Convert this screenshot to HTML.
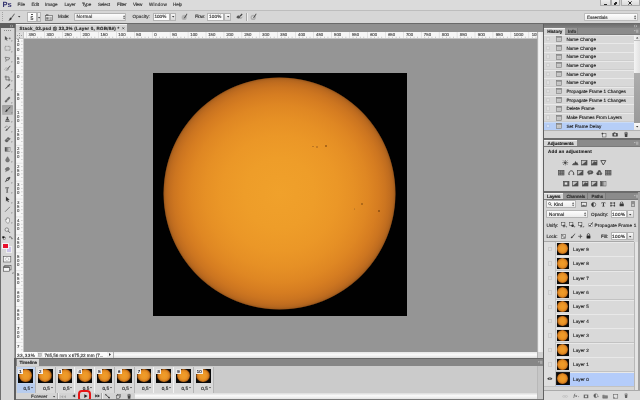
<!DOCTYPE html>
<html>
<head>
<meta charset="utf-8">
<title>Photoshop</title>
<style>
html,body{margin:0;padding:0;}
body{width:640px;height:400px;overflow:hidden;background:#d6d6d6;position:relative;font-family:"Liberation Sans",sans-serif;font-size:3.9px;color:#222;line-height:1.15;text-rendering:geometricPrecision;}
.a{position:absolute;}
.t{position:absolute;white-space:nowrap;-webkit-text-stroke:0.14px currentColor;}
svg{overflow:visible;}
</style>
</head>
<body>
<div id="root" style="position:absolute;left:0;top:0;width:640px;height:400px;overflow:hidden;will-change:transform;opacity:0.999;">
<div class="a" style="left:0.00px;top:0.00px;width:640.00px;height:10.00px;background:#dbdbdb;"></div>
<div class="a" style="left:0.00px;top:10.00px;width:640.00px;height:13.00px;background:#d6d6d6;"></div>
<div class="a" style="left:0.00px;top:9.80px;width:640.00px;height:0.60px;background:#f2f2f2;"></div>
<div class="a" style="left:0.00px;top:10.40px;width:640.00px;height:0.50px;background:#bdbdbd;"></div>
<div class="a" style="left:0.00px;top:22.80px;width:640.00px;height:1.00px;background:#6a6a6a;"></div>
<div class="a" style="left:0.00px;top:23.80px;width:640.00px;height:1.50px;background:#8f8f8f;"></div>
<div class="a" style="left:0.00px;top:23.50px;width:16.00px;height:376.50px;background:#d6d6d6;"></div>
<div class="a" style="left:0.00px;top:23.50px;width:1.40px;height:376.50px;background:#6e6e6e;"></div>
<div class="a" style="left:13.90px;top:23.50px;width:2.10px;height:376.50px;background:linear-gradient(90deg,#b8b8b8 0%,#8a8a8a 45%,#6e6e6e 100%);"></div>
<div class="a" style="left:0.00px;top:23.30px;width:15.00px;height:4.40px;background:#5f5f5f;"></div>
<div class="a" style="left:14.40px;top:358.00px;width:1.60px;height:42.00px;background:#5f5f5f;"></div>
<div class="a" style="left:16.00px;top:25.00px;width:527.00px;height:7.00px;background:#909090;"></div>
<div class="a" style="left:16.00px;top:24.30px;width:111.00px;height:7.70px;background:#d4d4d4;"></div>
<div class="a" style="left:16.00px;top:24.30px;width:111.00px;height:0.60px;background:#f0f0f0;"></div>
<div class="a" style="left:23.00px;top:38.20px;width:514.50px;height:313.80px;background:#959595;"></div>
<div class="a" style="left:16.00px;top:32.00px;width:521.50px;height:6.30px;background:#f6f6f6;"></div>
<div class="a" style="left:16.00px;top:32.00px;width:7.00px;height:320.00px;background:#f6f6f6;"></div>
<div class="a" style="left:537.30px;top:32.00px;width:5.70px;height:326.00px;background:linear-gradient(90deg,#dcdcdc,#f4f4f4 40%,#e4e4e4);"></div>
<div class="a" style="left:16.00px;top:352.00px;width:521.30px;height:5.80px;background:linear-gradient(180deg,#e6e6e6,#fafafa 45%,#dedede);"></div>
<div class="a" style="left:537.30px;top:352.00px;width:5.70px;height:5.80px;background:#d0d0d0;"></div>
<div class="a" style="left:153.00px;top:73.40px;width:253.70px;height:242.80px;background:#000;"></div>
<div class="a" style="left:163.0px;top:76.9px;width:233.2px;height:233.2px;border-radius:50%;background:radial-gradient(circle closest-side at 50% 50%, #f0a12b 0%, #ee9d29 30%, #eb9727 50%, #e69025 64%, #df8723 76%, #d67d21 85%, #cc7520 91%, #c16d1f 95%, #b4661e 97.6%, #a05a1c 99%, rgba(120,66,20,0.55) 99.7%, rgba(0,0,0,0) 100%);"></div>
<div class="a" style="left:312.20px;top:145.70px;width:1.60px;height:1.60px;border-radius:50%;background:#b97320;"></div>
<div class="a" style="left:316.20px;top:146.20px;width:1.60px;height:1.60px;border-radius:50%;background:#bd7622;"></div>
<div class="a" style="left:324.50px;top:145.30px;width:2.00px;height:2.00px;border-radius:50%;background:#9a5a14;"></div>
<div class="a" style="left:360.80px;top:202.60px;width:2.00px;height:2.00px;border-radius:50%;background:#a05f16;"></div>
<div class="a" style="left:353.90px;top:208.30px;width:1.40px;height:1.40px;border-radius:50%;background:#c27a24;"></div>
<div class="a" style="left:378.00px;top:210.30px;width:2.00px;height:2.00px;border-radius:50%;background:#8a4c10;"></div>
<div class="a" style="left:16.00px;top:357.80px;width:527.00px;height:1.40px;background:#676767;"></div>
<div class="a" style="left:16.00px;top:359.20px;width:527.00px;height:6.80px;background:#868686;"></div>
<div class="a" style="left:17.30px;top:359.40px;width:21.30px;height:6.60px;background:#d4d4d4;"></div>
<div class="a" style="left:16.00px;top:366.00px;width:527.00px;height:34.00px;background:#cbcbcb;"></div>
<div class="a" style="left:543.00px;top:23.80px;width:97.00px;height:376.20px;background:#d6d6d6;"></div>
<div class="a" style="left:543.00px;top:23.80px;width:1.20px;height:376.20px;background:#606060;"></div>
<div class="t" style="left:2.40px;top:1px;font-size:7.6px;color:#33326f;letter-spacing:-0.048px;font-weight:bold;-webkit-text-stroke:0px currentColor;">Ps</div>
<div class="t" style="left:17.60px;top:2px;font-size:4.6px;color:#333;">File</div>
<div class="t" style="left:31.40px;top:2px;font-size:4.6px;color:#333;letter-spacing:-0.082px;">Edit</div>
<div class="t" style="left:45.00px;top:2px;font-size:4.6px;color:#333;letter-spacing:-0.037px;">Image</div>
<div class="t" style="left:64.40px;top:2px;font-size:4.6px;color:#333;letter-spacing:-0.101px;">Layer</div>
<div class="t" style="left:82.00px;top:2px;font-size:4.6px;color:#333;letter-spacing:-0.243px;">Type</div>
<div class="t" style="left:98.00px;top:2px;font-size:4.6px;color:#333;letter-spacing:-0.131px;">Select</div>
<div class="t" style="left:117.00px;top:2px;font-size:4.6px;color:#333;letter-spacing:-0.137px;">Filter</div>
<div class="t" style="left:133.00px;top:2px;font-size:4.6px;color:#333;letter-spacing:-0.222px;">View</div>
<div class="t" style="left:149.00px;top:2px;font-size:4.6px;color:#333;letter-spacing:0.273px;">Window</div>
<div class="t" style="left:173.00px;top:2px;font-size:4.6px;color:#333;letter-spacing:-0.115px;">Help</div>
<div class="a" style="left:600.00px;top:0.00px;width:40.00px;height:6.40px;background:#d2d2d2;border-radius:0 0 1px 1px;"></div>
<div class="a" style="left:600.20px;top:0.00px;width:10.40px;height:6.40px;background:linear-gradient(180deg,#ececec,#dadada);border:0.4px solid #ababab;border-top:none;box-sizing:border-box;border-radius:0 0 1px 1px;"></div>
<div class="a" style="left:611.20px;top:0.00px;width:9.20px;height:6.40px;background:linear-gradient(180deg,#ececec,#dadada);border:0.4px solid #ababab;border-top:none;box-sizing:border-box;border-radius:0 0 1px 1px;"></div>
<div class="a" style="left:621.20px;top:0.00px;width:18.60px;height:6.40px;background:linear-gradient(180deg,#ececec,#dadada);border:0.4px solid #ababab;border-top:none;box-sizing:border-box;border-radius:0 0 1px 1px;"></div>
<div class="a" style="left:603.60px;top:3.60px;width:3.20px;height:1.00px;background:#2a2a2a;"></div>
<div class="a" style="left:614.60px;top:1.80px;width:2.60px;height:2.20px;background:transparent;border:0.7px solid #2a2a2a;box-sizing:border-box;"></div>
<div class="a" style="left:613.80px;top:2.80px;width:2.60px;height:2.20px;background:#e6e6e6;border:0.7px solid #2a2a2a;box-sizing:border-box;"></div>
<svg class="a" style="left:628.20px;top:1.40px" width="4" height="4" viewBox="0 0 4 4"><path d="M0.4 0.4L3.6 3.6M3.6 0.4L0.4 3.6" stroke="#222" stroke-width="1.0" fill="none"/></svg>
<div class="a" style="left:2.30px;top:12.40px;width:0.60px;height:0.90px;background:#a2a2a2;"></div>
<div class="a" style="left:2.30px;top:14.30px;width:0.60px;height:0.90px;background:#a2a2a2;"></div>
<div class="a" style="left:2.30px;top:16.20px;width:0.60px;height:0.90px;background:#a2a2a2;"></div>
<div class="a" style="left:2.30px;top:18.10px;width:0.60px;height:0.90px;background:#a2a2a2;"></div>
<div class="a" style="left:2.30px;top:20.00px;width:0.60px;height:0.90px;background:#a2a2a2;"></div>
<svg class="a" style="left:7.50px;top:12.60px" width="7" height="8" viewBox="0 0 7 8"><path d="M6.3 0.5L3.2 4.4L3.9 5.0L6.8 1.0Z" fill="#555"/><path d="M3.0 4.6C2.0 4.6 1.6 5.4 1.5 6.2C1.3 6.8 0.7 7.2 0.3 7.3C1.6 7.8 3.4 7.3 3.8 5.3Z" fill="#333"/></svg>
<svg class="a" style="left:18.20px;top:16.20px" width="2.4" height="1.6" viewBox="0 0 2.4 1.6"><path d="M0 0H2.4L1.2 1.5Z" fill="#333"/></svg>
<div class="a" style="left:27.00px;top:12.00px;width:10.00px;height:10.30px;background:linear-gradient(180deg,#ffffff,#f2f2f2);border:0.4px solid #b4b4b4;box-sizing:border-box;"></div>
<div class="a" style="left:31.30px;top:13.60px;width:1.30px;height:1.30px;background:#333;border-radius:50%;"></div>
<div class="t" style="left:30.40px;top:17px;font-size:5.2px;color:#1a1a1a;letter-spacing:0.008px;">5</div>
<div class="a" style="left:37.20px;top:12.00px;width:3.80px;height:10.30px;background:linear-gradient(180deg,#f4f4f4,#d6d6d6);border:0.4px solid #b4b4b4;box-sizing:border-box;"></div>
<svg class="a" style="left:38.00px;top:16.60px" width="2.2" height="1.5" viewBox="0 0 2.2 1.5"><path d="M0 0H2.2L1.1 1.4Z" fill="#333"/></svg>
<svg class="a" style="left:44.60px;top:13.80px" width="8" height="7" viewBox="0 0 8 7"><rect x="0.3" y="1.6" width="7.2" height="5" fill="#e9e9e9" stroke="#555" stroke-width="0.6"/><rect x="1.0" y="0.3" width="2.4" height="1.6" fill="#666"/><path d="M1.2 3.2H3.6V5.6H1.2Z" fill="#777"/><path d="M4.4 3.4H6.8M4.4 4.6H6.8M4.4 5.6H6.8" stroke="#666" stroke-width="0.5"/></svg>
<div class="t" style="left:58.00px;top:14px;font-size:4.6px;color:#333;letter-spacing:-0.357px;">Mode:</div>
<div class="a" style="left:73.60px;top:12.80px;width:52.60px;height:7.80px;background:linear-gradient(180deg,#fdfdfd,#e9e9e9);border:0.4px solid #b4b4b4;box-sizing:border-box;border-radius:0.8px;"></div>
<div class="t" style="left:76.40px;top:14px;font-size:4.6px;color:#333;letter-spacing:0.196px;">Normal</div>
<svg class="a" style="left:122.60px;top:14.60px" width="2.2" height="4.4" viewBox="0 0 2.2 4.4"><path d="M0 1.7L1.1 0.2L2.2 1.7ZM0 2.7L1.1 4.2L2.2 2.7Z" fill="#444"/></svg>
<div class="t" style="left:132.50px;top:14px;font-size:4.6px;color:#333;letter-spacing:0.078px;">Opacity:</div>
<div class="a" style="left:152.60px;top:12.80px;width:17.00px;height:7.80px;background:#fbfbfb;border:0.4px solid #b4b4b4;box-sizing:border-box;"></div>
<div class="t" style="left:154.60px;top:14px;font-size:4.6px;color:#333;letter-spacing:-0.041px;">100%</div>
<div class="a" style="left:170.00px;top:12.80px;width:6.20px;height:7.80px;background:linear-gradient(180deg,#f6f6f6,#d8d8d8);border:0.4px solid #b4b4b4;box-sizing:border-box;"></div>
<svg class="a" style="left:171.90px;top:16.20px" width="2.4" height="1.6" viewBox="0 0 2.4 1.6"><path d="M0 0H2.4L1.2 1.5Z" fill="#333"/></svg>
<svg class="a" style="left:181.00px;top:13.20px" width="7" height="7.4" viewBox="0 0 7 7.4"><circle cx="3.2" cy="4.4" r="2.6" fill="#b5b5b5"/><path d="M5.8 0.6L3.4 4.2L2.6 5.8L4.2 4.8L6.4 1.0Z" fill="#444"/></svg>
<div class="t" style="left:195.00px;top:14px;font-size:4.6px;color:#333;letter-spacing:-0.298px;">Flow:</div>
<div class="a" style="left:206.80px;top:12.80px;width:17.00px;height:7.80px;background:#fbfbfb;border:0.4px solid #b4b4b4;box-sizing:border-box;"></div>
<div class="t" style="left:209.00px;top:14px;font-size:4.6px;color:#333;letter-spacing:0.159px;">100%</div>
<div class="a" style="left:224.40px;top:12.80px;width:7.00px;height:7.80px;background:linear-gradient(180deg,#f6f6f6,#d8d8d8);border:0.4px solid #b4b4b4;box-sizing:border-box;"></div>
<svg class="a" style="left:226.70px;top:16.20px" width="2.4" height="1.6" viewBox="0 0 2.4 1.6"><path d="M0 0H2.4L1.2 1.5Z" fill="#333"/></svg>
<svg class="a" style="left:235.60px;top:13.40px" width="7.4" height="7" viewBox="0 0 7.4 7"><path d="M0.4 4.6C1.0 2.6 2.6 2.2 3.6 3.0L4.4 4.2C3.8 5.6 2.0 6.2 0.4 4.6Z" fill="#555"/><path d="M3.6 2.8L5.8 0.6L6.6 1.4L4.6 3.8Z" fill="#444"/><path d="M4.0 5.2C5.0 5.6 5.8 4.8 6.6 3.8" stroke="#666" stroke-width="0.5" fill="none"/></svg>
<div class="a" style="left:246.00px;top:12.60px;width:0.50px;height:8.40px;background:#a8a8a8;"></div>
<div class="a" style="left:246.50px;top:12.60px;width:0.50px;height:8.40px;background:#ededed;"></div>
<svg class="a" style="left:250.00px;top:13.20px" width="7.4" height="7.4" viewBox="0 0 7.4 7.4"><circle cx="3.2" cy="4.4" r="2.6" fill="#b0b0b0"/><circle cx="3.2" cy="4.4" r="1.2" fill="#dcdcdc"/><path d="M6.0 0.6L3.6 4.0L2.8 5.6L4.4 4.6L6.6 1.0Z" fill="#444"/></svg>
<div class="a" style="left:583.60px;top:13.00px;width:54.20px;height:8.20px;background:linear-gradient(180deg,#fefefe,#ececec);border:0.4px solid #bdbdbd;box-sizing:border-box;border-radius:0.8px;"></div>
<div class="t" style="left:587.00px;top:15px;font-size:4.6px;color:#333;letter-spacing:-0.037px;">Essentials</div>
<svg class="a" style="left:633.60px;top:14.80px" width="2.2" height="4.6" viewBox="0 0 2.2 4.6"><path d="M0 1.8L1.1 0.2L2.2 1.8ZM0 2.8L1.1 4.4L2.2 2.8Z" fill="#444"/></svg>
<div class="t" style="left:19.40px;top:26px;font-size:4.5px;color:#2a2a2a;letter-spacing:0.250px;font-weight:bold;">Stack_03.psd @ 33,3% (Layer 0, RGB/8#) *</div>
<svg class="a" style="left:121.80px;top:26.80px" width="2.6" height="2.6" viewBox="0 0 2.6 2.6"><path d="M0.3 0.3L2.3 2.3M2.3 0.3L0.3 2.3" stroke="#333" stroke-width="0.6"/></svg>
<div class="a" style="left:4.20px;top:29.60px;width:1.00px;height:0.60px;background:#8a8a8a;"></div>
<div class="a" style="left:6.20px;top:29.60px;width:1.00px;height:0.60px;background:#8a8a8a;"></div>
<div class="a" style="left:8.20px;top:29.60px;width:1.00px;height:0.60px;background:#8a8a8a;"></div>
<div class="a" style="left:10.20px;top:29.60px;width:1.00px;height:0.60px;background:#8a8a8a;"></div>
<svg class="a" style="left:9.80px;top:24.60px" width="3.6" height="2.2" viewBox="0 0 3.6 2.2"><path d="M0 0L1.2 1.1L0 2.2M1.8 0L3.0 1.1L1.8 2.2" stroke="#cfcfcf" stroke-width="0.5" fill="none"/></svg>
<div class="t" style="left:28.51px;top:33px;font-size:4.3px;color:#484848;letter-spacing:0.008px;">350</div>
<div class="t" style="left:46.48px;top:33px;font-size:4.3px;color:#484848;letter-spacing:0.008px;">300</div>
<div class="t" style="left:64.45px;top:33px;font-size:4.3px;color:#484848;letter-spacing:0.008px;">250</div>
<div class="t" style="left:82.42px;top:33px;font-size:4.3px;color:#484848;letter-spacing:0.008px;">200</div>
<div class="t" style="left:100.39px;top:33px;font-size:4.3px;color:#484848;letter-spacing:0.008px;">150</div>
<div class="t" style="left:118.36px;top:33px;font-size:4.3px;color:#484848;letter-spacing:0.008px;">100</div>
<div class="t" style="left:136.33px;top:33px;font-size:4.3px;color:#484848;letter-spacing:-0.092px;">50</div>
<div class="t" style="left:154.30px;top:33px;font-size:4.3px;color:#484848;letter-spacing:-0.192px;">0</div>
<div class="t" style="left:172.27px;top:33px;font-size:4.3px;color:#484848;letter-spacing:-0.092px;">50</div>
<div class="t" style="left:190.24px;top:33px;font-size:4.3px;color:#484848;letter-spacing:0.008px;">100</div>
<div class="t" style="left:208.21px;top:33px;font-size:4.3px;color:#484848;letter-spacing:0.008px;">150</div>
<div class="t" style="left:226.18px;top:33px;font-size:4.3px;color:#484848;letter-spacing:0.008px;">200</div>
<div class="t" style="left:244.15px;top:33px;font-size:4.3px;color:#484848;letter-spacing:0.008px;">250</div>
<div class="t" style="left:262.12px;top:33px;font-size:4.3px;color:#484848;letter-spacing:0.008px;">300</div>
<div class="t" style="left:280.09px;top:33px;font-size:4.3px;color:#484848;letter-spacing:0.008px;">350</div>
<div class="t" style="left:298.06px;top:33px;font-size:4.3px;color:#484848;letter-spacing:0.008px;">400</div>
<div class="t" style="left:316.03px;top:33px;font-size:4.3px;color:#484848;letter-spacing:0.008px;">450</div>
<div class="t" style="left:334.00px;top:33px;font-size:4.3px;color:#484848;letter-spacing:0.008px;">500</div>
<div class="t" style="left:351.97px;top:33px;font-size:4.3px;color:#484848;letter-spacing:0.008px;">550</div>
<div class="t" style="left:369.94px;top:33px;font-size:4.3px;color:#484848;letter-spacing:0.008px;">600</div>
<div class="t" style="left:387.91px;top:33px;font-size:4.3px;color:#484848;letter-spacing:0.008px;">650</div>
<div class="t" style="left:405.88px;top:33px;font-size:4.3px;color:#484848;letter-spacing:0.008px;">700</div>
<div class="t" style="left:423.85px;top:33px;font-size:4.3px;color:#484848;letter-spacing:0.008px;">750</div>
<div class="t" style="left:441.82px;top:33px;font-size:4.3px;color:#484848;letter-spacing:0.008px;">800</div>
<div class="t" style="left:459.79px;top:33px;font-size:4.3px;color:#484848;letter-spacing:0.008px;">850</div>
<div class="t" style="left:477.76px;top:33px;font-size:4.3px;color:#484848;letter-spacing:0.008px;">900</div>
<div class="t" style="left:495.73px;top:33px;font-size:4.3px;color:#484848;letter-spacing:0.008px;">950</div>
<div class="t" style="left:513.70px;top:33px;font-size:4.3px;color:#484848;letter-spacing:0.008px;">1000</div>
<div class="t" style="left:531.67px;top:33px;font-size:4.3px;color:#484848;letter-spacing:0.008px;">1050</div>
<svg class="a" style="left:16.00px;top:32.00px" width="521" height="6.2" viewBox="0 0 521 6.2"><rect x="6.22" y="4.70" width="0.7" height="1.5" fill="#bdbdbd"/><rect x="9.91" y="0" width="0.5" height="6.2" fill="#cfcfcf"/><rect x="13.40" y="4.70" width="0.7" height="1.5" fill="#bdbdbd"/><rect x="17.00" y="4.70" width="0.7" height="1.5" fill="#bdbdbd"/><rect x="20.59" y="4.70" width="0.7" height="1.5" fill="#bdbdbd"/><rect x="24.19" y="4.70" width="0.7" height="1.5" fill="#bdbdbd"/><rect x="27.88" y="0" width="0.5" height="6.2" fill="#cfcfcf"/><rect x="31.37" y="4.70" width="0.7" height="1.5" fill="#bdbdbd"/><rect x="34.97" y="4.70" width="0.7" height="1.5" fill="#bdbdbd"/><rect x="38.56" y="4.70" width="0.7" height="1.5" fill="#bdbdbd"/><rect x="42.16" y="4.70" width="0.7" height="1.5" fill="#bdbdbd"/><rect x="45.85" y="0" width="0.5" height="6.2" fill="#cfcfcf"/><rect x="49.34" y="4.70" width="0.7" height="1.5" fill="#bdbdbd"/><rect x="52.94" y="4.70" width="0.7" height="1.5" fill="#bdbdbd"/><rect x="56.53" y="4.70" width="0.7" height="1.5" fill="#bdbdbd"/><rect x="60.13" y="4.70" width="0.7" height="1.5" fill="#bdbdbd"/><rect x="63.82" y="0" width="0.5" height="6.2" fill="#cfcfcf"/><rect x="67.31" y="4.70" width="0.7" height="1.5" fill="#bdbdbd"/><rect x="70.91" y="4.70" width="0.7" height="1.5" fill="#bdbdbd"/><rect x="74.50" y="4.70" width="0.7" height="1.5" fill="#bdbdbd"/><rect x="78.10" y="4.70" width="0.7" height="1.5" fill="#bdbdbd"/><rect x="81.79" y="0" width="0.5" height="6.2" fill="#cfcfcf"/><rect x="85.28" y="4.70" width="0.7" height="1.5" fill="#bdbdbd"/><rect x="88.88" y="4.70" width="0.7" height="1.5" fill="#bdbdbd"/><rect x="92.47" y="4.70" width="0.7" height="1.5" fill="#bdbdbd"/><rect x="96.07" y="4.70" width="0.7" height="1.5" fill="#bdbdbd"/><rect x="99.76" y="0" width="0.5" height="6.2" fill="#cfcfcf"/><rect x="103.25" y="4.70" width="0.7" height="1.5" fill="#bdbdbd"/><rect x="106.85" y="4.70" width="0.7" height="1.5" fill="#bdbdbd"/><rect x="110.44" y="4.70" width="0.7" height="1.5" fill="#bdbdbd"/><rect x="114.04" y="4.70" width="0.7" height="1.5" fill="#bdbdbd"/><rect x="117.73" y="0" width="0.5" height="6.2" fill="#cfcfcf"/><rect x="121.22" y="4.70" width="0.7" height="1.5" fill="#bdbdbd"/><rect x="124.82" y="4.70" width="0.7" height="1.5" fill="#bdbdbd"/><rect x="128.41" y="4.70" width="0.7" height="1.5" fill="#bdbdbd"/><rect x="132.01" y="4.70" width="0.7" height="1.5" fill="#bdbdbd"/><rect x="135.70" y="0" width="0.5" height="6.2" fill="#cfcfcf"/><rect x="139.19" y="4.70" width="0.7" height="1.5" fill="#bdbdbd"/><rect x="142.79" y="4.70" width="0.7" height="1.5" fill="#bdbdbd"/><rect x="146.38" y="4.70" width="0.7" height="1.5" fill="#bdbdbd"/><rect x="149.98" y="4.70" width="0.7" height="1.5" fill="#bdbdbd"/><rect x="153.67" y="0" width="0.5" height="6.2" fill="#cfcfcf"/><rect x="157.16" y="4.70" width="0.7" height="1.5" fill="#bdbdbd"/><rect x="160.76" y="4.70" width="0.7" height="1.5" fill="#bdbdbd"/><rect x="164.35" y="4.70" width="0.7" height="1.5" fill="#bdbdbd"/><rect x="167.95" y="4.70" width="0.7" height="1.5" fill="#bdbdbd"/><rect x="171.64" y="0" width="0.5" height="6.2" fill="#cfcfcf"/><rect x="175.13" y="4.70" width="0.7" height="1.5" fill="#bdbdbd"/><rect x="178.73" y="4.70" width="0.7" height="1.5" fill="#bdbdbd"/><rect x="182.32" y="4.70" width="0.7" height="1.5" fill="#bdbdbd"/><rect x="185.92" y="4.70" width="0.7" height="1.5" fill="#bdbdbd"/><rect x="189.61" y="0" width="0.5" height="6.2" fill="#cfcfcf"/><rect x="193.10" y="4.70" width="0.7" height="1.5" fill="#bdbdbd"/><rect x="196.70" y="4.70" width="0.7" height="1.5" fill="#bdbdbd"/><rect x="200.29" y="4.70" width="0.7" height="1.5" fill="#bdbdbd"/><rect x="203.89" y="4.70" width="0.7" height="1.5" fill="#bdbdbd"/><rect x="207.58" y="0" width="0.5" height="6.2" fill="#cfcfcf"/><rect x="211.07" y="4.70" width="0.7" height="1.5" fill="#bdbdbd"/><rect x="214.67" y="4.70" width="0.7" height="1.5" fill="#bdbdbd"/><rect x="218.26" y="4.70" width="0.7" height="1.5" fill="#bdbdbd"/><rect x="221.86" y="4.70" width="0.7" height="1.5" fill="#bdbdbd"/><rect x="225.55" y="0" width="0.5" height="6.2" fill="#cfcfcf"/><rect x="229.04" y="4.70" width="0.7" height="1.5" fill="#bdbdbd"/><rect x="232.64" y="4.70" width="0.7" height="1.5" fill="#bdbdbd"/><rect x="236.23" y="4.70" width="0.7" height="1.5" fill="#bdbdbd"/><rect x="239.83" y="4.70" width="0.7" height="1.5" fill="#bdbdbd"/><rect x="243.52" y="0" width="0.5" height="6.2" fill="#cfcfcf"/><rect x="247.01" y="4.70" width="0.7" height="1.5" fill="#bdbdbd"/><rect x="250.61" y="4.70" width="0.7" height="1.5" fill="#bdbdbd"/><rect x="254.20" y="4.70" width="0.7" height="1.5" fill="#bdbdbd"/><rect x="257.80" y="4.70" width="0.7" height="1.5" fill="#bdbdbd"/><rect x="261.49" y="0" width="0.5" height="6.2" fill="#cfcfcf"/><rect x="264.98" y="4.70" width="0.7" height="1.5" fill="#bdbdbd"/><rect x="268.58" y="4.70" width="0.7" height="1.5" fill="#bdbdbd"/><rect x="272.17" y="4.70" width="0.7" height="1.5" fill="#bdbdbd"/><rect x="275.77" y="4.70" width="0.7" height="1.5" fill="#bdbdbd"/><rect x="279.46" y="0" width="0.5" height="6.2" fill="#cfcfcf"/><rect x="282.95" y="4.70" width="0.7" height="1.5" fill="#bdbdbd"/><rect x="286.55" y="4.70" width="0.7" height="1.5" fill="#bdbdbd"/><rect x="290.14" y="4.70" width="0.7" height="1.5" fill="#bdbdbd"/><rect x="293.74" y="4.70" width="0.7" height="1.5" fill="#bdbdbd"/><rect x="297.43" y="0" width="0.5" height="6.2" fill="#cfcfcf"/><rect x="300.92" y="4.70" width="0.7" height="1.5" fill="#bdbdbd"/><rect x="304.52" y="4.70" width="0.7" height="1.5" fill="#bdbdbd"/><rect x="308.11" y="4.70" width="0.7" height="1.5" fill="#bdbdbd"/><rect x="311.71" y="4.70" width="0.7" height="1.5" fill="#bdbdbd"/><rect x="315.40" y="0" width="0.5" height="6.2" fill="#cfcfcf"/><rect x="318.89" y="4.70" width="0.7" height="1.5" fill="#bdbdbd"/><rect x="322.49" y="4.70" width="0.7" height="1.5" fill="#bdbdbd"/><rect x="326.08" y="4.70" width="0.7" height="1.5" fill="#bdbdbd"/><rect x="329.68" y="4.70" width="0.7" height="1.5" fill="#bdbdbd"/><rect x="333.37" y="0" width="0.5" height="6.2" fill="#cfcfcf"/><rect x="336.86" y="4.70" width="0.7" height="1.5" fill="#bdbdbd"/><rect x="340.46" y="4.70" width="0.7" height="1.5" fill="#bdbdbd"/><rect x="344.05" y="4.70" width="0.7" height="1.5" fill="#bdbdbd"/><rect x="347.65" y="4.70" width="0.7" height="1.5" fill="#bdbdbd"/><rect x="351.34" y="0" width="0.5" height="6.2" fill="#cfcfcf"/><rect x="354.83" y="4.70" width="0.7" height="1.5" fill="#bdbdbd"/><rect x="358.43" y="4.70" width="0.7" height="1.5" fill="#bdbdbd"/><rect x="362.02" y="4.70" width="0.7" height="1.5" fill="#bdbdbd"/><rect x="365.62" y="4.70" width="0.7" height="1.5" fill="#bdbdbd"/><rect x="369.31" y="0" width="0.5" height="6.2" fill="#cfcfcf"/><rect x="372.80" y="4.70" width="0.7" height="1.5" fill="#bdbdbd"/><rect x="376.40" y="4.70" width="0.7" height="1.5" fill="#bdbdbd"/><rect x="379.99" y="4.70" width="0.7" height="1.5" fill="#bdbdbd"/><rect x="383.59" y="4.70" width="0.7" height="1.5" fill="#bdbdbd"/><rect x="387.28" y="0" width="0.5" height="6.2" fill="#cfcfcf"/><rect x="390.77" y="4.70" width="0.7" height="1.5" fill="#bdbdbd"/><rect x="394.37" y="4.70" width="0.7" height="1.5" fill="#bdbdbd"/><rect x="397.96" y="4.70" width="0.7" height="1.5" fill="#bdbdbd"/><rect x="401.56" y="4.70" width="0.7" height="1.5" fill="#bdbdbd"/><rect x="405.25" y="0" width="0.5" height="6.2" fill="#cfcfcf"/><rect x="408.74" y="4.70" width="0.7" height="1.5" fill="#bdbdbd"/><rect x="412.34" y="4.70" width="0.7" height="1.5" fill="#bdbdbd"/><rect x="415.93" y="4.70" width="0.7" height="1.5" fill="#bdbdbd"/><rect x="419.53" y="4.70" width="0.7" height="1.5" fill="#bdbdbd"/><rect x="423.22" y="0" width="0.5" height="6.2" fill="#cfcfcf"/><rect x="426.71" y="4.70" width="0.7" height="1.5" fill="#bdbdbd"/><rect x="430.31" y="4.70" width="0.7" height="1.5" fill="#bdbdbd"/><rect x="433.90" y="4.70" width="0.7" height="1.5" fill="#bdbdbd"/><rect x="437.50" y="4.70" width="0.7" height="1.5" fill="#bdbdbd"/><rect x="441.19" y="0" width="0.5" height="6.2" fill="#cfcfcf"/><rect x="444.68" y="4.70" width="0.7" height="1.5" fill="#bdbdbd"/><rect x="448.28" y="4.70" width="0.7" height="1.5" fill="#bdbdbd"/><rect x="451.87" y="4.70" width="0.7" height="1.5" fill="#bdbdbd"/><rect x="455.47" y="4.70" width="0.7" height="1.5" fill="#bdbdbd"/><rect x="459.16" y="0" width="0.5" height="6.2" fill="#cfcfcf"/><rect x="462.65" y="4.70" width="0.7" height="1.5" fill="#bdbdbd"/><rect x="466.25" y="4.70" width="0.7" height="1.5" fill="#bdbdbd"/><rect x="469.84" y="4.70" width="0.7" height="1.5" fill="#bdbdbd"/><rect x="473.44" y="4.70" width="0.7" height="1.5" fill="#bdbdbd"/><rect x="477.13" y="0" width="0.5" height="6.2" fill="#cfcfcf"/><rect x="480.62" y="4.70" width="0.7" height="1.5" fill="#bdbdbd"/><rect x="484.22" y="4.70" width="0.7" height="1.5" fill="#bdbdbd"/><rect x="487.81" y="4.70" width="0.7" height="1.5" fill="#bdbdbd"/><rect x="491.41" y="4.70" width="0.7" height="1.5" fill="#bdbdbd"/><rect x="495.10" y="0" width="0.5" height="6.2" fill="#cfcfcf"/><rect x="498.59" y="4.70" width="0.7" height="1.5" fill="#bdbdbd"/><rect x="502.19" y="4.70" width="0.7" height="1.5" fill="#bdbdbd"/><rect x="505.78" y="4.70" width="0.7" height="1.5" fill="#bdbdbd"/><rect x="509.38" y="4.70" width="0.7" height="1.5" fill="#bdbdbd"/><rect x="513.07" y="0" width="0.5" height="6.2" fill="#cfcfcf"/><rect x="516.56" y="4.70" width="0.7" height="1.5" fill="#bdbdbd"/><rect x="520.16" y="4.70" width="0.7" height="1.5" fill="#bdbdbd"/></svg>
<div class="t" style="left:17.00px;top:39px;font-size:4.3px;color:#484848;letter-spacing:0.008px;">1</div>
<div class="t" style="left:17.00px;top:43px;font-size:4.3px;color:#484848;letter-spacing:0.008px;">0</div>
<div class="t" style="left:17.00px;top:48px;font-size:4.3px;color:#484848;letter-spacing:0.008px;">0</div>
<div class="t" style="left:17.00px;top:57px;font-size:4.3px;color:#484848;letter-spacing:0.008px;">5</div>
<div class="t" style="left:17.00px;top:61px;font-size:4.3px;color:#484848;letter-spacing:0.008px;">0</div>
<div class="t" style="left:17.00px;top:75px;font-size:4.3px;color:#484848;letter-spacing:0.008px;">0</div>
<div class="t" style="left:17.00px;top:93px;font-size:4.3px;color:#484848;letter-spacing:0.008px;">5</div>
<div class="t" style="left:17.00px;top:97px;font-size:4.3px;color:#484848;letter-spacing:0.008px;">0</div>
<div class="t" style="left:17.00px;top:111px;font-size:4.3px;color:#484848;letter-spacing:0.008px;">1</div>
<div class="t" style="left:17.00px;top:115px;font-size:4.3px;color:#484848;letter-spacing:0.008px;">0</div>
<div class="t" style="left:17.00px;top:119px;font-size:4.3px;color:#484848;letter-spacing:0.008px;">0</div>
<div class="t" style="left:17.00px;top:129px;font-size:4.3px;color:#484848;letter-spacing:0.008px;">1</div>
<div class="t" style="left:17.00px;top:133px;font-size:4.3px;color:#484848;letter-spacing:0.008px;">5</div>
<div class="t" style="left:17.00px;top:137px;font-size:4.3px;color:#484848;letter-spacing:0.008px;">0</div>
<div class="t" style="left:17.00px;top:147px;font-size:4.3px;color:#484848;letter-spacing:0.008px;">2</div>
<div class="t" style="left:17.00px;top:151px;font-size:4.3px;color:#484848;letter-spacing:0.008px;">0</div>
<div class="t" style="left:17.00px;top:155px;font-size:4.3px;color:#484848;letter-spacing:0.008px;">0</div>
<div class="t" style="left:17.00px;top:165px;font-size:4.3px;color:#484848;letter-spacing:0.008px;">2</div>
<div class="t" style="left:17.00px;top:169px;font-size:4.3px;color:#484848;letter-spacing:0.008px;">5</div>
<div class="t" style="left:17.00px;top:173px;font-size:4.3px;color:#484848;letter-spacing:0.008px;">0</div>
<div class="t" style="left:17.00px;top:183px;font-size:4.3px;color:#484848;letter-spacing:0.008px;">3</div>
<div class="t" style="left:17.00px;top:187px;font-size:4.3px;color:#484848;letter-spacing:0.008px;">0</div>
<div class="t" style="left:17.00px;top:191px;font-size:4.3px;color:#484848;letter-spacing:0.008px;">0</div>
<div class="t" style="left:17.00px;top:201px;font-size:4.3px;color:#484848;letter-spacing:0.008px;">3</div>
<div class="t" style="left:17.00px;top:205px;font-size:4.3px;color:#484848;letter-spacing:0.008px;">5</div>
<div class="t" style="left:17.00px;top:209px;font-size:4.3px;color:#484848;letter-spacing:0.008px;">0</div>
<div class="t" style="left:17.00px;top:219px;font-size:4.3px;color:#484848;letter-spacing:0.008px;">4</div>
<div class="t" style="left:17.00px;top:223px;font-size:4.3px;color:#484848;letter-spacing:0.008px;">0</div>
<div class="t" style="left:17.00px;top:227px;font-size:4.3px;color:#484848;letter-spacing:0.008px;">0</div>
<div class="t" style="left:17.00px;top:237px;font-size:4.3px;color:#484848;letter-spacing:0.008px;">4</div>
<div class="t" style="left:17.00px;top:241px;font-size:4.3px;color:#484848;letter-spacing:0.008px;">5</div>
<div class="t" style="left:17.00px;top:245px;font-size:4.3px;color:#484848;letter-spacing:0.008px;">0</div>
<div class="t" style="left:17.00px;top:255px;font-size:4.3px;color:#484848;letter-spacing:0.008px;">5</div>
<div class="t" style="left:17.00px;top:259px;font-size:4.3px;color:#484848;letter-spacing:0.008px;">0</div>
<div class="t" style="left:17.00px;top:263px;font-size:4.3px;color:#484848;letter-spacing:0.008px;">0</div>
<div class="t" style="left:17.00px;top:273px;font-size:4.3px;color:#484848;letter-spacing:0.008px;">5</div>
<div class="t" style="left:17.00px;top:277px;font-size:4.3px;color:#484848;letter-spacing:0.008px;">5</div>
<div class="t" style="left:17.00px;top:281px;font-size:4.3px;color:#484848;letter-spacing:0.008px;">0</div>
<div class="t" style="left:17.00px;top:291px;font-size:4.3px;color:#484848;letter-spacing:0.008px;">6</div>
<div class="t" style="left:17.00px;top:295px;font-size:4.3px;color:#484848;letter-spacing:0.008px;">0</div>
<div class="t" style="left:17.00px;top:299px;font-size:4.3px;color:#484848;letter-spacing:0.008px;">0</div>
<div class="t" style="left:17.00px;top:309px;font-size:4.3px;color:#484848;letter-spacing:0.008px;">6</div>
<div class="t" style="left:17.00px;top:313px;font-size:4.3px;color:#484848;letter-spacing:0.008px;">5</div>
<div class="t" style="left:17.00px;top:317px;font-size:4.3px;color:#484848;letter-spacing:0.008px;">0</div>
<div class="t" style="left:17.00px;top:327px;font-size:4.3px;color:#484848;letter-spacing:0.008px;">7</div>
<div class="t" style="left:17.00px;top:331px;font-size:4.3px;color:#484848;letter-spacing:0.008px;">0</div>
<div class="t" style="left:17.00px;top:335px;font-size:4.3px;color:#484848;letter-spacing:0.008px;">0</div>
<div class="t" style="left:17.00px;top:345px;font-size:4.3px;color:#484848;letter-spacing:0.008px;">7</div>
<svg class="a" style="left:16.00px;top:32.00px" width="6.6" height="320" viewBox="0 0 6.6 320"><rect x="5.10" y="8.55" width="1.5" height="0.7" fill="#bdbdbd"/><rect x="5.10" y="12.15" width="1.5" height="0.7" fill="#bdbdbd"/><rect x="5.10" y="15.74" width="1.5" height="0.7" fill="#bdbdbd"/><rect x="5.10" y="19.34" width="1.5" height="0.7" fill="#bdbdbd"/><rect x="0" y="23.03" width="6.6" height="0.5" fill="#cfcfcf"/><rect x="5.10" y="26.52" width="1.5" height="0.7" fill="#bdbdbd"/><rect x="5.10" y="30.12" width="1.5" height="0.7" fill="#bdbdbd"/><rect x="5.10" y="33.71" width="1.5" height="0.7" fill="#bdbdbd"/><rect x="5.10" y="37.31" width="1.5" height="0.7" fill="#bdbdbd"/><rect x="0" y="41.00" width="6.6" height="0.5" fill="#cfcfcf"/><rect x="5.10" y="44.49" width="1.5" height="0.7" fill="#bdbdbd"/><rect x="5.10" y="48.09" width="1.5" height="0.7" fill="#bdbdbd"/><rect x="5.10" y="51.68" width="1.5" height="0.7" fill="#bdbdbd"/><rect x="5.10" y="55.28" width="1.5" height="0.7" fill="#bdbdbd"/><rect x="0" y="58.97" width="6.6" height="0.5" fill="#cfcfcf"/><rect x="5.10" y="62.46" width="1.5" height="0.7" fill="#bdbdbd"/><rect x="5.10" y="66.06" width="1.5" height="0.7" fill="#bdbdbd"/><rect x="5.10" y="69.65" width="1.5" height="0.7" fill="#bdbdbd"/><rect x="5.10" y="73.25" width="1.5" height="0.7" fill="#bdbdbd"/><rect x="0" y="76.94" width="6.6" height="0.5" fill="#cfcfcf"/><rect x="5.10" y="80.43" width="1.5" height="0.7" fill="#bdbdbd"/><rect x="5.10" y="84.03" width="1.5" height="0.7" fill="#bdbdbd"/><rect x="5.10" y="87.62" width="1.5" height="0.7" fill="#bdbdbd"/><rect x="5.10" y="91.22" width="1.5" height="0.7" fill="#bdbdbd"/><rect x="0" y="94.91" width="6.6" height="0.5" fill="#cfcfcf"/><rect x="5.10" y="98.40" width="1.5" height="0.7" fill="#bdbdbd"/><rect x="5.10" y="102.00" width="1.5" height="0.7" fill="#bdbdbd"/><rect x="5.10" y="105.59" width="1.5" height="0.7" fill="#bdbdbd"/><rect x="5.10" y="109.19" width="1.5" height="0.7" fill="#bdbdbd"/><rect x="0" y="112.88" width="6.6" height="0.5" fill="#cfcfcf"/><rect x="5.10" y="116.37" width="1.5" height="0.7" fill="#bdbdbd"/><rect x="5.10" y="119.97" width="1.5" height="0.7" fill="#bdbdbd"/><rect x="5.10" y="123.56" width="1.5" height="0.7" fill="#bdbdbd"/><rect x="5.10" y="127.16" width="1.5" height="0.7" fill="#bdbdbd"/><rect x="0" y="130.85" width="6.6" height="0.5" fill="#cfcfcf"/><rect x="5.10" y="134.34" width="1.5" height="0.7" fill="#bdbdbd"/><rect x="5.10" y="137.94" width="1.5" height="0.7" fill="#bdbdbd"/><rect x="5.10" y="141.53" width="1.5" height="0.7" fill="#bdbdbd"/><rect x="5.10" y="145.13" width="1.5" height="0.7" fill="#bdbdbd"/><rect x="0" y="148.82" width="6.6" height="0.5" fill="#cfcfcf"/><rect x="5.10" y="152.31" width="1.5" height="0.7" fill="#bdbdbd"/><rect x="5.10" y="155.91" width="1.5" height="0.7" fill="#bdbdbd"/><rect x="5.10" y="159.50" width="1.5" height="0.7" fill="#bdbdbd"/><rect x="5.10" y="163.10" width="1.5" height="0.7" fill="#bdbdbd"/><rect x="0" y="166.79" width="6.6" height="0.5" fill="#cfcfcf"/><rect x="5.10" y="170.28" width="1.5" height="0.7" fill="#bdbdbd"/><rect x="5.10" y="173.88" width="1.5" height="0.7" fill="#bdbdbd"/><rect x="5.10" y="177.47" width="1.5" height="0.7" fill="#bdbdbd"/><rect x="5.10" y="181.07" width="1.5" height="0.7" fill="#bdbdbd"/><rect x="0" y="184.76" width="6.6" height="0.5" fill="#cfcfcf"/><rect x="5.10" y="188.25" width="1.5" height="0.7" fill="#bdbdbd"/><rect x="5.10" y="191.85" width="1.5" height="0.7" fill="#bdbdbd"/><rect x="5.10" y="195.44" width="1.5" height="0.7" fill="#bdbdbd"/><rect x="5.10" y="199.04" width="1.5" height="0.7" fill="#bdbdbd"/><rect x="0" y="202.73" width="6.6" height="0.5" fill="#cfcfcf"/><rect x="5.10" y="206.22" width="1.5" height="0.7" fill="#bdbdbd"/><rect x="5.10" y="209.82" width="1.5" height="0.7" fill="#bdbdbd"/><rect x="5.10" y="213.41" width="1.5" height="0.7" fill="#bdbdbd"/><rect x="5.10" y="217.01" width="1.5" height="0.7" fill="#bdbdbd"/><rect x="0" y="220.70" width="6.6" height="0.5" fill="#cfcfcf"/><rect x="5.10" y="224.19" width="1.5" height="0.7" fill="#bdbdbd"/><rect x="5.10" y="227.79" width="1.5" height="0.7" fill="#bdbdbd"/><rect x="5.10" y="231.38" width="1.5" height="0.7" fill="#bdbdbd"/><rect x="5.10" y="234.98" width="1.5" height="0.7" fill="#bdbdbd"/><rect x="0" y="238.67" width="6.6" height="0.5" fill="#cfcfcf"/><rect x="5.10" y="242.16" width="1.5" height="0.7" fill="#bdbdbd"/><rect x="5.10" y="245.76" width="1.5" height="0.7" fill="#bdbdbd"/><rect x="5.10" y="249.35" width="1.5" height="0.7" fill="#bdbdbd"/><rect x="5.10" y="252.95" width="1.5" height="0.7" fill="#bdbdbd"/><rect x="0" y="256.64" width="6.6" height="0.5" fill="#cfcfcf"/><rect x="5.10" y="260.13" width="1.5" height="0.7" fill="#bdbdbd"/><rect x="5.10" y="263.73" width="1.5" height="0.7" fill="#bdbdbd"/><rect x="5.10" y="267.32" width="1.5" height="0.7" fill="#bdbdbd"/><rect x="5.10" y="270.92" width="1.5" height="0.7" fill="#bdbdbd"/><rect x="0" y="274.61" width="6.6" height="0.5" fill="#cfcfcf"/><rect x="5.10" y="278.10" width="1.5" height="0.7" fill="#bdbdbd"/><rect x="5.10" y="281.70" width="1.5" height="0.7" fill="#bdbdbd"/><rect x="5.10" y="285.29" width="1.5" height="0.7" fill="#bdbdbd"/><rect x="5.10" y="288.89" width="1.5" height="0.7" fill="#bdbdbd"/><rect x="0" y="292.58" width="6.6" height="0.5" fill="#cfcfcf"/><rect x="5.10" y="296.07" width="1.5" height="0.7" fill="#bdbdbd"/><rect x="5.10" y="299.67" width="1.5" height="0.7" fill="#bdbdbd"/><rect x="5.10" y="303.26" width="1.5" height="0.7" fill="#bdbdbd"/><rect x="5.10" y="306.86" width="1.5" height="0.7" fill="#bdbdbd"/><rect x="0" y="310.55" width="6.6" height="0.5" fill="#cfcfcf"/><rect x="5.10" y="314.04" width="1.5" height="0.7" fill="#bdbdbd"/><rect x="5.10" y="317.64" width="1.5" height="0.7" fill="#bdbdbd"/></svg>
<div class="a" style="left:16.00px;top:32.00px;width:7.00px;height:6.30px;background:#dedede;"></div>
<div class="a" style="left:22.80px;top:32.00px;width:0.40px;height:320.00px;background:#c4c4c4;"></div>
<div class="a" style="left:16.00px;top:38.00px;width:521.30px;height:0.40px;background:#c4c4c4;"></div>
<div class="a" style="left:17.40px;top:35.00px;width:0.60px;height:0.60px;background:#999;"></div>
<div class="a" style="left:19.00px;top:33.40px;width:0.60px;height:0.60px;background:#999;"></div>
<div class="a" style="left:19.00px;top:35.00px;width:0.60px;height:0.60px;background:#999;"></div>
<div class="a" style="left:19.00px;top:35.00px;width:0.60px;height:0.60px;background:#999;"></div>
<div class="a" style="left:20.60px;top:35.00px;width:0.60px;height:0.60px;background:#999;"></div>
<div class="a" style="left:19.00px;top:36.60px;width:0.60px;height:0.60px;background:#999;"></div>
<div class="a" style="left:16.30px;top:352.30px;width:20.50px;height:5.20px;background:#fbfbfb;"></div>
<div class="t" style="left:17.00px;top:353px;font-size:4.6px;color:#333;letter-spacing:0.433px;">33,33%</div>
<svg class="a" style="left:37.60px;top:353.20px" width="3.6" height="3.6" viewBox="0 0 3.6 3.6"><rect x="0.3" y="0.3" width="3" height="3" fill="#c8c8c8" stroke="#888" stroke-width="0.4"/></svg>
<div class="a" style="left:42.60px;top:352.30px;width:64.20px;height:5.20px;background:#fbfbfb;"></div>
<div class="t" style="left:44.60px;top:353px;font-size:4.6px;color:#333;letter-spacing:-0.047px;">765,56 mm x 675,22 mm (7...</div>
<svg class="a" style="left:109.20px;top:353.40px" width="2.2" height="3.0" viewBox="0 0 2.2 3.0"><path d="M0 0L2.0 1.5L0 3.0Z" fill="#333"/></svg>
<div class="a" style="left:113.40px;top:352.20px;width:0.40px;height:5.40px;background:#b0b0b0;"></div>
<div class="a" style="left:1.60px;top:104.60px;width:11.90px;height:10.00px;background:linear-gradient(180deg,#9f9f9f,#b4b4b4);border-radius:0.8px;"></div>
<svg class="a" style="left:3.7px;top:34.70px;opacity:0.88" width="7.4" height="6.66" viewBox="0 0 10 9"><path d="M1.2 1.2L1.2 7.0L2.7 5.6L3.8 7.8L4.8 7.3L3.7 5.2L5.6 5.0Z" fill="#404040"/><path d="M6.4 4.6H9.0M7.7 3.3V5.9" stroke="#404040" stroke-width="0.7"/></svg>
<svg class="a" style="left:11.20px;top:40.20px" width="1.2" height="1.2" viewBox="0 0 1.2 1.2"><path d="M1.2 0V1.2H0Z" fill="#555"/></svg>
<svg class="a" style="left:3.7px;top:45.30px;opacity:0.88" width="7.4" height="6.66" viewBox="0 0 10 9"><rect x="1.4" y="1.8" width="6.8" height="5.2" fill="none" stroke="#404040" stroke-width="0.7" stroke-dasharray="1.3 0.7"/></svg>
<svg class="a" style="left:11.20px;top:50.80px" width="1.2" height="1.2" viewBox="0 0 1.2 1.2"><path d="M1.2 0V1.2H0Z" fill="#555"/></svg>
<svg class="a" style="left:3.7px;top:55.70px;opacity:0.88" width="7.4" height="6.66" viewBox="0 0 10 9"><path d="M1.4 1.6L7.8 2.6L6.2 5.2L3.0 5.4ZM3.0 5.4L2.2 7.8" fill="none" stroke="#404040" stroke-width="0.8"/></svg>
<svg class="a" style="left:11.20px;top:61.20px" width="1.2" height="1.2" viewBox="0 0 1.2 1.2"><path d="M1.2 0V1.2H0Z" fill="#555"/></svg>
<svg class="a" style="left:3.7px;top:65.30px;opacity:0.88" width="7.4" height="6.66" viewBox="0 0 10 9"><ellipse cx="3.6" cy="5.8" rx="2.6" ry="1.8" fill="none" stroke="#404040" stroke-width="0.6" stroke-dasharray="0.9 0.6"/><path d="M8.2 0.8L4.4 5.0L5.2 5.8L8.8 1.4Z" fill="#404040"/><path d="M4.2 5.2L3.0 7.0L5.0 6.0Z" fill="#404040"/></svg>
<svg class="a" style="left:11.20px;top:70.80px" width="1.2" height="1.2" viewBox="0 0 1.2 1.2"><path d="M1.2 0V1.2H0Z" fill="#555"/></svg>
<svg class="a" style="left:3.7px;top:74.70px;opacity:0.88" width="7.4" height="6.66" viewBox="0 0 10 9"><path d="M2.6 0.8V6.6H8.6M0.8 2.6H6.8V8.4" fill="none" stroke="#404040" stroke-width="0.9"/></svg>
<svg class="a" style="left:11.20px;top:80.20px" width="1.2" height="1.2" viewBox="0 0 1.2 1.2"><path d="M1.2 0V1.2H0Z" fill="#555"/></svg>
<svg class="a" style="left:3.7px;top:83.10px;opacity:0.88" width="7.4" height="6.66" viewBox="0 0 10 9"><path d="M8.0 1.0C8.8 1.8 8.6 2.6 7.8 3.2L7.0 3.8L7.4 4.4L6.8 5.0L6.2 4.6L3.0 7.6L1.6 8.2L1.4 7.8L2.2 6.6L5.2 3.6L4.8 3.0L5.4 2.4L6.0 2.8L6.6 2.0C7.0 1.2 7.4 0.8 8.0 1.0Z" fill="#404040"/></svg>
<svg class="a" style="left:11.20px;top:88.60px" width="1.2" height="1.2" viewBox="0 0 1.2 1.2"><path d="M1.2 0V1.2H0Z" fill="#555"/></svg>
<svg class="a" style="left:3.7px;top:96.10px;opacity:0.88" width="7.4" height="6.66" viewBox="0 0 10 9"><path d="M1.6 6.6L6.2 1.6C7.2 0.8 8.6 2.0 7.8 3.2L3.4 8.0C2.2 8.8 0.8 7.8 1.6 6.6Z" fill="#5a5a5a" stroke="#404040" stroke-width="0.5"/><path d="M3.2 4.6L5.2 6.4" stroke="#ddd" stroke-width="0.5"/></svg>
<svg class="a" style="left:11.20px;top:101.60px" width="1.2" height="1.2" viewBox="0 0 1.2 1.2"><path d="M1.2 0V1.2H0Z" fill="#555"/></svg>
<svg class="a" style="left:3.7px;top:106.30px;opacity:0.88" width="7.4" height="6.66" viewBox="0 0 10 9"><path d="M8.4 0.8L4.4 4.6L5.2 5.4L8.9 1.4Z" fill="#2a2a2a"/><path d="M4.2 4.8C3.2 4.6 2.6 5.4 2.5 6.2C2.3 7.0 1.6 7.4 1.0 7.6C2.6 8.4 4.6 7.8 5.0 5.6Z" fill="#1e1e1e"/></svg>
<svg class="a" style="left:11.20px;top:111.80px" width="1.2" height="1.2" viewBox="0 0 1.2 1.2"><path d="M1.2 0V1.2H0Z" fill="#555"/></svg>
<svg class="a" style="left:3.7px;top:115.70px;opacity:0.88" width="7.4" height="6.66" viewBox="0 0 10 9"><path d="M3.6 1.0H5.6V3.6L6.8 4.6V5.6H2.4V4.6L3.6 3.6Z" fill="#404040"/><rect x="1.6" y="6.2" width="6" height="1.6" fill="#404040"/></svg>
<svg class="a" style="left:11.20px;top:121.20px" width="1.2" height="1.2" viewBox="0 0 1.2 1.2"><path d="M1.2 0V1.2H0Z" fill="#555"/></svg>
<svg class="a" style="left:3.7px;top:125.30px;opacity:0.88" width="7.4" height="6.66" viewBox="0 0 10 9"><path d="M8.2 1.2L4.6 4.8L5.4 5.6L8.8 1.8Z" fill="#404040"/><path d="M4.4 5.0C3.4 4.8 2.8 5.6 2.7 6.4C2.5 7.0 2.0 7.4 1.4 7.6C3.0 8.2 4.8 7.8 5.2 5.8Z" fill="#404040"/><path d="M1.4 3.6C1.6 1.8 3.6 1.0 5.0 2.0" fill="none" stroke="#404040" stroke-width="0.6"/><path d="M0.8 3.0L1.4 4.2L2.4 3.2Z" fill="#404040"/></svg>
<svg class="a" style="left:11.20px;top:130.80px" width="1.2" height="1.2" viewBox="0 0 1.2 1.2"><path d="M1.2 0V1.2H0Z" fill="#555"/></svg>
<svg class="a" style="left:3.7px;top:135.70px;opacity:0.88" width="7.4" height="6.66" viewBox="0 0 10 9"><path d="M1.2 6.0L5.4 1.8L8.6 3.6L4.6 8.0H2.6Z" fill="#555" stroke="#404040" stroke-width="0.5"/><path d="M3.4 3.8L6.6 5.8" stroke="#ddd" stroke-width="0.5"/></svg>
<svg class="a" style="left:11.20px;top:141.20px" width="1.2" height="1.2" viewBox="0 0 1.2 1.2"><path d="M1.2 0V1.2H0Z" fill="#555"/></svg>
<svg class="a" style="left:3.7px;top:145.70px;opacity:0.88" width="7.4" height="6.66" viewBox="0 0 10 9"><defs><linearGradient id="gt" x1="0" x2="1"><stop offset="0" stop-color="#2a2a2a"/><stop offset="1" stop-color="#e8e8e8"/></linearGradient></defs><rect x="1.4" y="1.8" width="6.8" height="5.4" fill="url(#gt)" stroke="#404040" stroke-width="0.5"/></svg>
<svg class="a" style="left:11.20px;top:151.20px" width="1.2" height="1.2" viewBox="0 0 1.2 1.2"><path d="M1.2 0V1.2H0Z" fill="#555"/></svg>
<svg class="a" style="left:3.7px;top:155.70px;opacity:0.88" width="7.4" height="6.66" viewBox="0 0 10 9"><path d="M4.8 0.9C6.2 3.0 7.4 4.4 7.4 5.8C7.4 7.2 6.2 8.2 4.8 8.2C3.4 8.2 2.2 7.2 2.2 5.8C2.2 4.4 3.4 3.0 4.8 0.9Z" fill="#6a6a6a" stroke="#404040" stroke-width="0.5"/></svg>
<svg class="a" style="left:11.20px;top:161.20px" width="1.2" height="1.2" viewBox="0 0 1.2 1.2"><path d="M1.2 0V1.2H0Z" fill="#555"/></svg>
<svg class="a" style="left:3.7px;top:165.70px;opacity:0.88" width="7.4" height="6.66" viewBox="0 0 10 9"><ellipse cx="4.6" cy="4.2" rx="2.9" ry="2.2" fill="#666" stroke="#404040" stroke-width="0.5" transform="rotate(-20 4.6 4.2)"/><path d="M3.4 6.0L2.2 8.2" stroke="#404040" stroke-width="0.9"/></svg>
<svg class="a" style="left:11.20px;top:171.20px" width="1.2" height="1.2" viewBox="0 0 1.2 1.2"><path d="M1.2 0V1.2H0Z" fill="#555"/></svg>
<svg class="a" style="left:3.7px;top:176.10px;opacity:0.88" width="7.4" height="6.66" viewBox="0 0 10 9"><path d="M7.6 1.0L8.8 2.2L6.6 5.6L3.4 7.0L1.4 8.4L1.0 8.0L2.4 6.0L3.8 2.8Z" fill="#404040"/><circle cx="4.8" cy="4.8" r="0.7" fill="#ddd"/></svg>
<svg class="a" style="left:11.20px;top:181.60px" width="1.2" height="1.2" viewBox="0 0 1.2 1.2"><path d="M1.2 0V1.2H0Z" fill="#555"/></svg>
<svg class="a" style="left:5.2px;top:186.6px" width="4.4" height="6.2" viewBox="0 0 6 8.4"><path d="M0.4 0.6H5.4V2.0H5.0L4.6 1.3H3.5V6.8L4.4 7.2V7.6H1.4V7.2L2.3 6.8V1.3H1.2L0.8 2.0H0.4Z" fill="#333"/></svg>
<svg class="a" style="left:11.20px;top:191.80px" width="1.2" height="1.2" viewBox="0 0 1.2 1.2"><path d="M1.2 0V1.2H0Z" fill="#555"/></svg>
<svg class="a" style="left:3.7px;top:196.10px;opacity:0.88" width="7.4" height="6.66" viewBox="0 0 10 9"><path d="M2.6 0.8L2.6 7.4L4.2 5.8L5.4 8.4L6.6 7.8L5.4 5.4L7.6 5.2Z" fill="#222"/></svg>
<svg class="a" style="left:11.20px;top:201.60px" width="1.2" height="1.2" viewBox="0 0 1.2 1.2"><path d="M1.2 0V1.2H0Z" fill="#555"/></svg>
<svg class="a" style="left:3.7px;top:206.30px;opacity:0.88" width="7.4" height="6.66" viewBox="0 0 10 9"><path d="M1.4 7.8L8.0 1.2" stroke="#404040" stroke-width="0.9"/></svg>
<svg class="a" style="left:11.20px;top:211.80px" width="1.2" height="1.2" viewBox="0 0 1.2 1.2"><path d="M1.2 0V1.2H0Z" fill="#555"/></svg>
<svg class="a" style="left:3.7px;top:216.70px;opacity:0.88" width="7.4" height="6.66" viewBox="0 0 10 9"><path d="M2.2 4.8C1.2 3.6 2.0 2.8 3.0 3.6L3.4 4.0V1.8C3.4 1.0 4.4 1.0 4.4 1.8V1.2C4.4 0.4 5.5 0.4 5.5 1.2V1.6C5.5 0.9 6.5 0.9 6.5 1.7V2.4C6.6 1.8 7.5 1.8 7.5 2.6V5.6C7.5 7.2 6.6 8.2 5.2 8.2C3.8 8.2 3.2 7.4 2.2 4.8Z" fill="#f4f4f4" stroke="#404040" stroke-width="0.6"/></svg>
<svg class="a" style="left:11.20px;top:222.20px" width="1.2" height="1.2" viewBox="0 0 1.2 1.2"><path d="M1.2 0V1.2H0Z" fill="#555"/></svg>
<svg class="a" style="left:3.7px;top:226.70px;opacity:0.88" width="7.4" height="6.66" viewBox="0 0 10 9"><circle cx="3.8" cy="3.6" r="2.4" fill="#e8e8e8" stroke="#404040" stroke-width="0.8"/><path d="M5.6 5.4L8.2 8.0" stroke="#404040" stroke-width="1.2"/></svg>
<svg class="a" style="left:2.00px;top:236.20px" width="4" height="3.6" viewBox="0 0 4 3.6"><rect x="1.4" y="1.2" width="2.2" height="2.0" fill="#fff" stroke="#333" stroke-width="0.4"/><rect x="0.3" y="0.3" width="2.2" height="2.0" fill="#111"/></svg>
<svg class="a" style="left:9.40px;top:236.20px" width="4" height="3.6" viewBox="0 0 4 3.6"><path d="M0.6 1.0C2.2 0.6 3.0 1.4 3.0 3.0" fill="none" stroke="#333" stroke-width="0.5"/><path d="M0 1.0L1.2 0.2V1.8ZM3.0 3.6L2.3 2.4H3.7Z" fill="#333"/></svg>
<div class="a" style="left:5.60px;top:246.40px;width:6.60px;height:6.20px;background:#c9c3e6;border:0.4px solid #eee;box-sizing:border-box;"></div>
<div class="a" style="left:2.00px;top:242.80px;width:6.60px;height:6.40px;background:#e8102c;border:0.4px solid #f4f4f4;box-sizing:border-box;"></div>
<svg class="a" style="left:3.20px;top:255.60px" width="8.4" height="6.6" viewBox="0 0 8.4 6.6"><rect x="0.4" y="0.4" width="7.4" height="5.6" fill="#f4f4f4" stroke="#555" stroke-width="0.6"/><circle cx="4.1" cy="3.2" r="1.6" fill="none" stroke="#777" stroke-width="0.5" stroke-dasharray="0.7 0.5"/></svg>
<svg class="a" style="left:3.00px;top:265.40px" width="9" height="7" viewBox="0 0 9 7"><rect x="1.8" y="0.5" width="6.2" height="4.4" fill="#e8e8e8" stroke="#444" stroke-width="0.6"/><rect x="0.4" y="1.8" width="6.2" height="4.4" fill="#f6f6f6" stroke="#444" stroke-width="0.6"/><rect x="0.4" y="1.8" width="6.2" height="1.0" fill="#555"/></svg>
<svg class="a" style="left:11.60px;top:272.40px" width="1.4" height="1.4" viewBox="0 0 1.4 1.4"><path d="M1.4 0V1.4H0Z" fill="#444"/></svg>
<div class="t" style="left:19.60px;top:360px;font-size:4.5px;color:#2a2a2a;letter-spacing:-0.097px;font-weight:bold;">Timeline</div>
<svg class="a" style="left:537.60px;top:361.00px" width="4.4" height="3.4" viewBox="0 0 4.4 3.4"><path d="M0 0.4H1.6L0.8 1.4Z" fill="#ddd"/><path d="M2.0 0.3H4.4M2.0 1.3H4.4M2.0 2.3H4.4" stroke="#ddd" stroke-width="0.45"/></svg>
<div class="a" style="left:16.60px;top:366.60px;width:18.00px;height:26.00px;background:#c3d4ef;"></div>
<div class="a" style="left:16.60px;top:383.60px;width:18.00px;height:9.00px;background:#b7ccee;"></div>
<div class="a" style="left:34.90px;top:366.60px;width:0.50px;height:26.00px;background:#f2f2f2;"></div>
<div class="a" style="left:35.40px;top:366.60px;width:0.40px;height:26.00px;background:#b4b4b4;"></div>
<div class="a" style="left:18.00px;top:368.90px;width:14.90px;height:13.90px;background:#0a0a0a;"></div>
<div class="a" style="left:18.60px;top:369.12px;width:13.66px;height:13.27px;border-radius:50%;background:radial-gradient(circle closest-side at 50% 50%, #ef9d29 0%, #ec9627 50%, #df8822 75%, #c26f1b 90%, #8a4b0f 100%);"></div>
<div class="a" style="left:18.00px;top:368.90px;width:4.80px;height:5.00px;background:rgba(244,244,244,0.95);"></div>
<div class="t" style="left:19.20px;top:370px;font-size:4.3px;color:#112;letter-spacing:0.008px;-webkit-text-stroke:0.15px currentColor;">1</div>
<div class="t" style="left:23.40px;top:386px;font-size:4.6px;color:#1a1a1a;letter-spacing:0.168px;-webkit-text-stroke:0.15px currentColor;">0,5</div>
<svg class="a" style="left:30.90px;top:387.40px" width="2.0" height="1.4" viewBox="0 0 2.0 1.4"><path d="M0 0H2.0L1.0 1.3Z" fill="#333"/></svg>
<div class="a" style="left:35.85px;top:366.60px;width:19.05px;height:26.00px;background:#d9d9d9;"></div>
<div class="a" style="left:54.65px;top:366.60px;width:0.50px;height:26.00px;background:#f2f2f2;"></div>
<div class="a" style="left:55.15px;top:366.60px;width:0.40px;height:26.00px;background:#b4b4b4;"></div>
<div class="a" style="left:37.75px;top:368.90px;width:14.90px;height:13.90px;background:#0a0a0a;"></div>
<div class="a" style="left:38.35px;top:369.12px;width:13.66px;height:13.27px;border-radius:50%;background:radial-gradient(circle closest-side at 50% 50%, #ef9d29 0%, #ec9627 50%, #df8822 75%, #c26f1b 90%, #8a4b0f 100%);"></div>
<div class="a" style="left:37.75px;top:368.90px;width:4.80px;height:5.00px;background:rgba(244,244,244,0.95);"></div>
<div class="t" style="left:38.95px;top:370px;font-size:4.3px;color:#112;letter-spacing:0.008px;-webkit-text-stroke:0.15px currentColor;">2</div>
<div class="t" style="left:43.15px;top:386px;font-size:4.6px;color:#1a1a1a;letter-spacing:0.168px;-webkit-text-stroke:0.15px currentColor;">0,5</div>
<svg class="a" style="left:50.65px;top:387.40px" width="2.0" height="1.4" viewBox="0 0 2.0 1.4"><path d="M0 0H2.0L1.0 1.3Z" fill="#333"/></svg>
<div class="a" style="left:55.60px;top:366.60px;width:19.05px;height:26.00px;background:#d9d9d9;"></div>
<div class="a" style="left:74.40px;top:366.60px;width:0.50px;height:26.00px;background:#f2f2f2;"></div>
<div class="a" style="left:74.90px;top:366.60px;width:0.40px;height:26.00px;background:#b4b4b4;"></div>
<div class="a" style="left:57.50px;top:368.90px;width:14.90px;height:13.90px;background:#0a0a0a;"></div>
<div class="a" style="left:58.10px;top:369.12px;width:13.66px;height:13.27px;border-radius:50%;background:radial-gradient(circle closest-side at 50% 50%, #ef9d29 0%, #ec9627 50%, #df8822 75%, #c26f1b 90%, #8a4b0f 100%);"></div>
<div class="a" style="left:57.50px;top:368.90px;width:4.80px;height:5.00px;background:rgba(244,244,244,0.95);"></div>
<div class="t" style="left:58.70px;top:370px;font-size:4.3px;color:#112;letter-spacing:0.008px;-webkit-text-stroke:0.15px currentColor;">3</div>
<div class="t" style="left:62.90px;top:386px;font-size:4.6px;color:#1a1a1a;letter-spacing:0.168px;-webkit-text-stroke:0.15px currentColor;">0,5</div>
<svg class="a" style="left:70.40px;top:387.40px" width="2.0" height="1.4" viewBox="0 0 2.0 1.4"><path d="M0 0H2.0L1.0 1.3Z" fill="#333"/></svg>
<div class="a" style="left:75.35px;top:366.60px;width:19.05px;height:26.00px;background:#d9d9d9;"></div>
<div class="a" style="left:94.15px;top:366.60px;width:0.50px;height:26.00px;background:#f2f2f2;"></div>
<div class="a" style="left:94.65px;top:366.60px;width:0.40px;height:26.00px;background:#b4b4b4;"></div>
<div class="a" style="left:77.25px;top:368.90px;width:14.90px;height:13.90px;background:#0a0a0a;"></div>
<div class="a" style="left:77.85px;top:369.12px;width:13.66px;height:13.27px;border-radius:50%;background:radial-gradient(circle closest-side at 50% 50%, #ef9d29 0%, #ec9627 50%, #df8822 75%, #c26f1b 90%, #8a4b0f 100%);"></div>
<div class="a" style="left:77.25px;top:368.90px;width:4.80px;height:5.00px;background:rgba(244,244,244,0.95);"></div>
<div class="t" style="left:78.45px;top:370px;font-size:4.3px;color:#112;letter-spacing:0.008px;-webkit-text-stroke:0.15px currentColor;">4</div>
<div class="t" style="left:82.65px;top:386px;font-size:4.6px;color:#1a1a1a;letter-spacing:0.168px;-webkit-text-stroke:0.15px currentColor;">0,5</div>
<svg class="a" style="left:90.15px;top:387.40px" width="2.0" height="1.4" viewBox="0 0 2.0 1.4"><path d="M0 0H2.0L1.0 1.3Z" fill="#333"/></svg>
<div class="a" style="left:95.10px;top:366.60px;width:19.05px;height:26.00px;background:#d9d9d9;"></div>
<div class="a" style="left:113.90px;top:366.60px;width:0.50px;height:26.00px;background:#f2f2f2;"></div>
<div class="a" style="left:114.40px;top:366.60px;width:0.40px;height:26.00px;background:#b4b4b4;"></div>
<div class="a" style="left:97.00px;top:368.90px;width:14.90px;height:13.90px;background:#0a0a0a;"></div>
<div class="a" style="left:97.60px;top:369.12px;width:13.66px;height:13.27px;border-radius:50%;background:radial-gradient(circle closest-side at 50% 50%, #ef9d29 0%, #ec9627 50%, #df8822 75%, #c26f1b 90%, #8a4b0f 100%);"></div>
<div class="a" style="left:97.00px;top:368.90px;width:4.80px;height:5.00px;background:rgba(244,244,244,0.95);"></div>
<div class="t" style="left:98.20px;top:370px;font-size:4.3px;color:#112;letter-spacing:0.008px;-webkit-text-stroke:0.15px currentColor;">5</div>
<div class="t" style="left:102.40px;top:386px;font-size:4.6px;color:#1a1a1a;letter-spacing:0.168px;-webkit-text-stroke:0.15px currentColor;">0,5</div>
<svg class="a" style="left:109.90px;top:387.40px" width="2.0" height="1.4" viewBox="0 0 2.0 1.4"><path d="M0 0H2.0L1.0 1.3Z" fill="#333"/></svg>
<div class="a" style="left:114.85px;top:366.60px;width:19.05px;height:26.00px;background:#d9d9d9;"></div>
<div class="a" style="left:133.65px;top:366.60px;width:0.50px;height:26.00px;background:#f2f2f2;"></div>
<div class="a" style="left:134.15px;top:366.60px;width:0.40px;height:26.00px;background:#b4b4b4;"></div>
<div class="a" style="left:116.75px;top:368.90px;width:14.90px;height:13.90px;background:#0a0a0a;"></div>
<div class="a" style="left:117.35px;top:369.12px;width:13.66px;height:13.27px;border-radius:50%;background:radial-gradient(circle closest-side at 50% 50%, #ef9d29 0%, #ec9627 50%, #df8822 75%, #c26f1b 90%, #8a4b0f 100%);"></div>
<div class="a" style="left:116.75px;top:368.90px;width:4.80px;height:5.00px;background:rgba(244,244,244,0.95);"></div>
<div class="t" style="left:117.95px;top:370px;font-size:4.3px;color:#112;letter-spacing:0.008px;-webkit-text-stroke:0.15px currentColor;">6</div>
<div class="t" style="left:122.15px;top:386px;font-size:4.6px;color:#1a1a1a;letter-spacing:0.168px;-webkit-text-stroke:0.15px currentColor;">0,5</div>
<svg class="a" style="left:129.65px;top:387.40px" width="2.0" height="1.4" viewBox="0 0 2.0 1.4"><path d="M0 0H2.0L1.0 1.3Z" fill="#333"/></svg>
<div class="a" style="left:134.60px;top:366.60px;width:19.05px;height:26.00px;background:#d9d9d9;"></div>
<div class="a" style="left:153.40px;top:366.60px;width:0.50px;height:26.00px;background:#f2f2f2;"></div>
<div class="a" style="left:153.90px;top:366.60px;width:0.40px;height:26.00px;background:#b4b4b4;"></div>
<div class="a" style="left:136.50px;top:368.90px;width:14.90px;height:13.90px;background:#0a0a0a;"></div>
<div class="a" style="left:137.10px;top:369.12px;width:13.66px;height:13.27px;border-radius:50%;background:radial-gradient(circle closest-side at 50% 50%, #ef9d29 0%, #ec9627 50%, #df8822 75%, #c26f1b 90%, #8a4b0f 100%);"></div>
<div class="a" style="left:136.50px;top:368.90px;width:4.80px;height:5.00px;background:rgba(244,244,244,0.95);"></div>
<div class="t" style="left:137.70px;top:370px;font-size:4.3px;color:#112;letter-spacing:0.008px;-webkit-text-stroke:0.15px currentColor;">7</div>
<div class="t" style="left:141.90px;top:386px;font-size:4.6px;color:#1a1a1a;letter-spacing:0.168px;-webkit-text-stroke:0.15px currentColor;">0,5</div>
<svg class="a" style="left:149.40px;top:387.40px" width="2.0" height="1.4" viewBox="0 0 2.0 1.4"><path d="M0 0H2.0L1.0 1.3Z" fill="#333"/></svg>
<div class="a" style="left:154.35px;top:366.60px;width:19.05px;height:26.00px;background:#d9d9d9;"></div>
<div class="a" style="left:173.15px;top:366.60px;width:0.50px;height:26.00px;background:#f2f2f2;"></div>
<div class="a" style="left:173.65px;top:366.60px;width:0.40px;height:26.00px;background:#b4b4b4;"></div>
<div class="a" style="left:156.25px;top:368.90px;width:14.90px;height:13.90px;background:#0a0a0a;"></div>
<div class="a" style="left:156.85px;top:369.12px;width:13.66px;height:13.27px;border-radius:50%;background:radial-gradient(circle closest-side at 50% 50%, #ef9d29 0%, #ec9627 50%, #df8822 75%, #c26f1b 90%, #8a4b0f 100%);"></div>
<div class="a" style="left:156.25px;top:368.90px;width:4.80px;height:5.00px;background:rgba(244,244,244,0.95);"></div>
<div class="t" style="left:157.45px;top:370px;font-size:4.3px;color:#112;letter-spacing:0.008px;-webkit-text-stroke:0.15px currentColor;">8</div>
<div class="t" style="left:161.65px;top:386px;font-size:4.6px;color:#1a1a1a;letter-spacing:0.168px;-webkit-text-stroke:0.15px currentColor;">0,5</div>
<svg class="a" style="left:169.15px;top:387.40px" width="2.0" height="1.4" viewBox="0 0 2.0 1.4"><path d="M0 0H2.0L1.0 1.3Z" fill="#333"/></svg>
<div class="a" style="left:174.10px;top:366.60px;width:19.05px;height:26.00px;background:#d9d9d9;"></div>
<div class="a" style="left:192.90px;top:366.60px;width:0.50px;height:26.00px;background:#f2f2f2;"></div>
<div class="a" style="left:193.40px;top:366.60px;width:0.40px;height:26.00px;background:#b4b4b4;"></div>
<div class="a" style="left:176.00px;top:368.90px;width:14.90px;height:13.90px;background:#0a0a0a;"></div>
<div class="a" style="left:176.60px;top:369.12px;width:13.66px;height:13.27px;border-radius:50%;background:radial-gradient(circle closest-side at 50% 50%, #ef9d29 0%, #ec9627 50%, #df8822 75%, #c26f1b 90%, #8a4b0f 100%);"></div>
<div class="a" style="left:176.00px;top:368.90px;width:4.80px;height:5.00px;background:rgba(244,244,244,0.95);"></div>
<div class="t" style="left:177.20px;top:370px;font-size:4.3px;color:#112;letter-spacing:0.008px;-webkit-text-stroke:0.15px currentColor;">9</div>
<div class="t" style="left:181.40px;top:386px;font-size:4.6px;color:#1a1a1a;letter-spacing:0.168px;-webkit-text-stroke:0.15px currentColor;">0,5</div>
<svg class="a" style="left:188.90px;top:387.40px" width="2.0" height="1.4" viewBox="0 0 2.0 1.4"><path d="M0 0H2.0L1.0 1.3Z" fill="#333"/></svg>
<div class="a" style="left:193.85px;top:366.60px;width:19.05px;height:26.00px;background:#d9d9d9;"></div>
<div class="a" style="left:212.65px;top:366.60px;width:0.50px;height:26.00px;background:#f2f2f2;"></div>
<div class="a" style="left:213.15px;top:366.60px;width:0.40px;height:26.00px;background:#b4b4b4;"></div>
<div class="a" style="left:195.75px;top:368.90px;width:14.90px;height:13.90px;background:#0a0a0a;"></div>
<div class="a" style="left:196.35px;top:369.12px;width:13.66px;height:13.27px;border-radius:50%;background:radial-gradient(circle closest-side at 50% 50%, #ef9d29 0%, #ec9627 50%, #df8822 75%, #c26f1b 90%, #8a4b0f 100%);"></div>
<div class="a" style="left:195.75px;top:368.90px;width:7.20px;height:5.00px;background:rgba(244,244,244,0.95);"></div>
<div class="t" style="left:196.75px;top:370px;font-size:4.3px;color:#112;letter-spacing:0.108px;-webkit-text-stroke:0.15px currentColor;">10</div>
<div class="t" style="left:201.15px;top:386px;font-size:4.6px;color:#1a1a1a;letter-spacing:0.168px;-webkit-text-stroke:0.15px currentColor;">0,5</div>
<svg class="a" style="left:208.65px;top:387.40px" width="2.0" height="1.4" viewBox="0 0 2.0 1.4"><path d="M0 0H2.0L1.0 1.3Z" fill="#333"/></svg>
<div class="a" style="left:16.00px;top:392.80px;width:119.00px;height:0.40px;background:#b6b6b6;"></div>
<div class="a" style="left:16.00px;top:393.20px;width:119.00px;height:6.00px;background:#d3d3d3;"></div>
<div class="t" style="left:31.00px;top:394px;font-size:4.6px;color:#333;letter-spacing:0.079px;">Forever</div>
<svg class="a" style="left:52.80px;top:395.60px" width="2.2" height="1.5" viewBox="0 0 2.2 1.5"><path d="M0 0H2.2L1.1 1.4Z" fill="#333"/></svg>
<div class="a" style="left:57.20px;top:393.40px;width:0.40px;height:5.60px;background:#a8a8a8;"></div>
<div class="a" style="left:57.60px;top:393.40px;width:0.40px;height:5.60px;background:#eee;"></div>
<svg class="a" style="left:60.20px;top:394.60px" width="6.4" height="3.4" viewBox="0 0 6.4 3.4"><path d="M0.2 0.2V3.2" stroke="#aaa" stroke-width="0.6"/><path d="M3.2 0.2V3.2L0.8 1.7ZM6.0 0.2V3.2L3.6 1.7Z" fill="#aaa"/></svg>
<svg class="a" style="left:71.80px;top:394.40px" width="3.4" height="3.8" viewBox="0 0 3.4 3.8"><path d="M3.2 0.2V3.6L0.4 1.9Z" fill="#333"/><path d="M0.3 0.2V3.6" stroke="#333" stroke-width="0"/></svg>
<svg class="a" style="left:83.60px;top:394.20px" width="3.8" height="4.2" viewBox="0 0 3.8 4.2"><path d="M0.3 0.2L3.6 2.1L0.3 4.0Z" fill="#222"/></svg>
<div class="a" style="left:77.80px;top:389.90px;width:13.20px;height:12.40px;background:transparent;border:2.1px solid #e51515;border-radius:4px;box-sizing:border-box;"></div>
<svg class="a" style="left:94.60px;top:394.40px" width="5.4" height="3.8" viewBox="0 0 5.4 3.8"><path d="M0.2 0.2L2.6 1.9L0.2 3.6ZM2.6 0.2L5.0 1.9L2.6 3.6Z" fill="#333"/></svg>
<div class="a" style="left:101.40px;top:393.40px;width:0.40px;height:5.60px;background:#a8a8a8;"></div>
<div class="a" style="left:101.80px;top:393.40px;width:0.40px;height:5.60px;background:#eee;"></div>
<svg class="a" style="left:105.40px;top:394.20px" width="5" height="4.4" viewBox="0 0 5 4.4"><path d="M0.4 0.4L4.4 4.0" stroke="#333" stroke-width="0.8"/><circle cx="0.8" cy="0.8" r="0.7" fill="#555"/><circle cx="4.0" cy="3.6" r="0.8" fill="#333"/></svg>
<svg class="a" style="left:116.00px;top:394.00px" width="5" height="4.8" viewBox="0 0 5 4.8"><rect x="1.4" y="0.4" width="3.0" height="3.2" fill="#e2e2e2" stroke="#444" stroke-width="0.5"/><rect x="0.4" y="1.2" width="3.0" height="3.2" fill="#cfcfcf" stroke="#444" stroke-width="0.5"/></svg>
<svg class="a" style="left:127.40px;top:393.80px" width="4.4" height="5.0" viewBox="0 0 4.4 5.0"><path d="M0.2 1.0H4.0M1.4 0.4H2.8" stroke="#333" stroke-width="0.6"/><path d="M0.6 1.4H3.6L3.3 4.8H0.9Z" fill="#444"/></svg>
<div class="a" style="left:134.60px;top:393.20px;width:0.40px;height:6.00px;background:#a8a8a8;"></div>
<div class="a" style="left:135.00px;top:392.80px;width:402.20px;height:6.20px;background:linear-gradient(180deg,#dadada,#fafafa 45%,#e2e2e2);"></div>
<div class="a" style="left:537.20px;top:366.00px;width:5.80px;height:33.00px;background:#c6c6c6;"></div>
<div class="a" style="left:537.20px;top:366.00px;width:0.40px;height:33.00px;background:#b8b8b8;"></div>
<div class="a" style="left:16.00px;top:399.00px;width:527.00px;height:1.00px;background:#7a7a7a;"></div>
<div class="a" style="left:544.20px;top:23.80px;width:95.80px;height:3.80px;background:linear-gradient(180deg,#6e6e6e,#828282);"></div>
<svg class="a" style="left:634.40px;top:24.60px" width="3.6" height="2.2" viewBox="0 0 3.6 2.2"><path d="M0 0L1.2 1.1L0 2.2M1.8 0L3.0 1.1L1.8 2.2" stroke="#d8d8d8" stroke-width="0.5" fill="none"/></svg>
<div class="a" style="left:544.20px;top:27.60px;width:95.80px;height:7.20px;background:#8b8b8b;"></div>
<div class="a" style="left:544.20px;top:34.40px;width:95.80px;height:0.40px;background:#7a7a7a;"></div>
<div class="a" style="left:544.40px;top:27.60px;width:20.20px;height:7.20px;background:#d6d6d6;"></div>
<div class="a" style="left:544.40px;top:27.60px;width:20.20px;height:0.50px;background:#f0f0f0;"></div>
<div class="t" style="left:547.20px;top:29px;font-size:4.5px;color:#222;letter-spacing:-0.058px;font-weight:bold;">History</div>
<div class="a" style="left:564.90px;top:27.90px;width:12.50px;height:6.60px;background:#969696;"></div>
<div class="a" style="left:577.40px;top:27.90px;width:0.40px;height:6.60px;background:#7c7c7c;"></div>
<div class="t" style="left:568.00px;top:29px;font-size:4.5px;color:#333;letter-spacing:0.038px;font-weight:bold;">Info</div>
<svg class="a" style="left:634.20px;top:29.80px" width="4.4" height="3.0" viewBox="0 0 4.4 3.0"><path d="M0 0.2H1.6L0.8 1.2Z" fill="#e0e0e0"/><path d="M2.0 0.2H4.4M2.0 1.2H4.4M2.0 2.2H4.4" stroke="#e0e0e0" stroke-width="0.45"/></svg>
<div class="a" style="left:544.20px;top:34.80px;width:89.40px;height:8.68px;background:#d8d8d8;"></div>
<div class="a" style="left:544.20px;top:43.03px;width:89.40px;height:0.45px;background:#cdcdcd;"></div>
<div class="a" style="left:544.20px;top:34.80px;width:89.40px;height:0.40px;background:#e9e9e9;"></div>
<div class="a" style="left:545.60px;top:37.00px;width:4.60px;height:4.40px;background:#e0e0e0;border:0.35px solid #cfcfcf;box-sizing:border-box;"></div>
<svg class="a" style="left:556.20px;top:36.40px" width="6.2" height="6.0" viewBox="0 0 6.2 6.0"><rect x="0.4" y="0.4" width="5.2" height="5.0" fill="#dadada" stroke="#747474" stroke-width="0.6"/><rect x="0.4" y="0.4" width="5.2" height="1.3" fill="#858585"/><path d="M1.2 3.0H4.8M1.2 4.2H4.8" stroke="#9a9a9a" stroke-width="0.5"/></svg>
<div class="t" style="left:566.40px;top:37px;font-size:4.6px;color:#1e1e1e;letter-spacing:-0.006px;">Name Change</div>
<div class="a" style="left:544.20px;top:43.48px;width:89.40px;height:8.68px;background:#d8d8d8;"></div>
<div class="a" style="left:544.20px;top:51.71px;width:89.40px;height:0.45px;background:#cdcdcd;"></div>
<div class="a" style="left:544.20px;top:43.48px;width:89.40px;height:0.40px;background:#e9e9e9;"></div>
<div class="a" style="left:545.60px;top:45.68px;width:4.60px;height:4.40px;background:#e0e0e0;border:0.35px solid #cfcfcf;box-sizing:border-box;"></div>
<svg class="a" style="left:556.20px;top:45.08px" width="6.2" height="6.0" viewBox="0 0 6.2 6.0"><rect x="0.4" y="0.4" width="5.2" height="5.0" fill="#dadada" stroke="#747474" stroke-width="0.6"/><rect x="0.4" y="0.4" width="5.2" height="1.3" fill="#858585"/><path d="M1.2 3.0H4.8M1.2 4.2H4.8" stroke="#9a9a9a" stroke-width="0.5"/></svg>
<div class="t" style="left:566.40px;top:46px;font-size:4.6px;color:#1e1e1e;letter-spacing:-0.006px;">Name Change</div>
<div class="a" style="left:544.20px;top:52.16px;width:89.40px;height:8.68px;background:#d8d8d8;"></div>
<div class="a" style="left:544.20px;top:60.39px;width:89.40px;height:0.45px;background:#cdcdcd;"></div>
<div class="a" style="left:544.20px;top:52.16px;width:89.40px;height:0.40px;background:#e9e9e9;"></div>
<div class="a" style="left:545.60px;top:54.36px;width:4.60px;height:4.40px;background:#e0e0e0;border:0.35px solid #cfcfcf;box-sizing:border-box;"></div>
<svg class="a" style="left:556.20px;top:53.76px" width="6.2" height="6.0" viewBox="0 0 6.2 6.0"><rect x="0.4" y="0.4" width="5.2" height="5.0" fill="#dadada" stroke="#747474" stroke-width="0.6"/><rect x="0.4" y="0.4" width="5.2" height="1.3" fill="#858585"/><path d="M1.2 3.0H4.8M1.2 4.2H4.8" stroke="#9a9a9a" stroke-width="0.5"/></svg>
<div class="t" style="left:566.40px;top:54px;font-size:4.6px;color:#1e1e1e;letter-spacing:-0.006px;">Name Change</div>
<div class="a" style="left:544.20px;top:60.84px;width:89.40px;height:8.68px;background:#d8d8d8;"></div>
<div class="a" style="left:544.20px;top:69.07px;width:89.40px;height:0.45px;background:#cdcdcd;"></div>
<div class="a" style="left:544.20px;top:60.84px;width:89.40px;height:0.40px;background:#e9e9e9;"></div>
<div class="a" style="left:545.60px;top:63.04px;width:4.60px;height:4.40px;background:#e0e0e0;border:0.35px solid #cfcfcf;box-sizing:border-box;"></div>
<svg class="a" style="left:556.20px;top:62.44px" width="6.2" height="6.0" viewBox="0 0 6.2 6.0"><rect x="0.4" y="0.4" width="5.2" height="5.0" fill="#dadada" stroke="#747474" stroke-width="0.6"/><rect x="0.4" y="0.4" width="5.2" height="1.3" fill="#858585"/><path d="M1.2 3.0H4.8M1.2 4.2H4.8" stroke="#9a9a9a" stroke-width="0.5"/></svg>
<div class="t" style="left:566.40px;top:63px;font-size:4.6px;color:#1e1e1e;letter-spacing:-0.006px;">Name Change</div>
<div class="a" style="left:544.20px;top:69.52px;width:89.40px;height:8.68px;background:#d8d8d8;"></div>
<div class="a" style="left:544.20px;top:77.75px;width:89.40px;height:0.45px;background:#cdcdcd;"></div>
<div class="a" style="left:544.20px;top:69.52px;width:89.40px;height:0.40px;background:#e9e9e9;"></div>
<div class="a" style="left:545.60px;top:71.72px;width:4.60px;height:4.40px;background:#e0e0e0;border:0.35px solid #cfcfcf;box-sizing:border-box;"></div>
<svg class="a" style="left:556.20px;top:71.12px" width="6.2" height="6.0" viewBox="0 0 6.2 6.0"><rect x="0.4" y="0.4" width="5.2" height="5.0" fill="#dadada" stroke="#747474" stroke-width="0.6"/><rect x="0.4" y="0.4" width="5.2" height="1.3" fill="#858585"/><path d="M1.2 3.0H4.8M1.2 4.2H4.8" stroke="#9a9a9a" stroke-width="0.5"/></svg>
<div class="t" style="left:566.40px;top:72px;font-size:4.6px;color:#1e1e1e;letter-spacing:-0.006px;">Name Change</div>
<div class="a" style="left:544.20px;top:78.20px;width:89.40px;height:8.68px;background:#d8d8d8;"></div>
<div class="a" style="left:544.20px;top:86.43px;width:89.40px;height:0.45px;background:#cdcdcd;"></div>
<div class="a" style="left:544.20px;top:78.20px;width:89.40px;height:0.40px;background:#e9e9e9;"></div>
<div class="a" style="left:545.60px;top:80.40px;width:4.60px;height:4.40px;background:#e0e0e0;border:0.35px solid #cfcfcf;box-sizing:border-box;"></div>
<svg class="a" style="left:556.20px;top:79.80px" width="6.2" height="6.0" viewBox="0 0 6.2 6.0"><rect x="0.4" y="0.4" width="5.2" height="5.0" fill="#dadada" stroke="#747474" stroke-width="0.6"/><rect x="0.4" y="0.4" width="5.2" height="1.3" fill="#858585"/><path d="M1.2 3.0H4.8M1.2 4.2H4.8" stroke="#9a9a9a" stroke-width="0.5"/></svg>
<div class="t" style="left:566.40px;top:80px;font-size:4.6px;color:#1e1e1e;letter-spacing:-0.006px;">Name Change</div>
<div class="a" style="left:544.20px;top:86.88px;width:89.40px;height:8.68px;background:#d8d8d8;"></div>
<div class="a" style="left:544.20px;top:95.11px;width:89.40px;height:0.45px;background:#cdcdcd;"></div>
<div class="a" style="left:544.20px;top:86.88px;width:89.40px;height:0.40px;background:#e9e9e9;"></div>
<div class="a" style="left:545.60px;top:89.08px;width:4.60px;height:4.40px;background:#e0e0e0;border:0.35px solid #cfcfcf;box-sizing:border-box;"></div>
<svg class="a" style="left:556.20px;top:88.48px" width="6.2" height="6.0" viewBox="0 0 6.2 6.0"><rect x="0.4" y="0.4" width="5.2" height="5.0" fill="#dadada" stroke="#747474" stroke-width="0.6"/><rect x="0.4" y="0.4" width="5.2" height="1.3" fill="#858585"/><path d="M1.2 3.0H4.8M1.2 4.2H4.8" stroke="#9a9a9a" stroke-width="0.5"/></svg>
<div class="t" style="left:566.40px;top:89px;font-size:4.6px;color:#1e1e1e;letter-spacing:0.011px;">Propagate Frame 1 Changes</div>
<div class="a" style="left:544.20px;top:95.56px;width:89.40px;height:8.68px;background:#d8d8d8;"></div>
<div class="a" style="left:544.20px;top:103.79px;width:89.40px;height:0.45px;background:#cdcdcd;"></div>
<div class="a" style="left:544.20px;top:95.56px;width:89.40px;height:0.40px;background:#e9e9e9;"></div>
<div class="a" style="left:545.60px;top:97.76px;width:4.60px;height:4.40px;background:#e0e0e0;border:0.35px solid #cfcfcf;box-sizing:border-box;"></div>
<svg class="a" style="left:556.20px;top:97.16px" width="6.2" height="6.0" viewBox="0 0 6.2 6.0"><rect x="0.4" y="0.4" width="5.2" height="5.0" fill="#dadada" stroke="#747474" stroke-width="0.6"/><rect x="0.4" y="0.4" width="5.2" height="1.3" fill="#858585"/><path d="M1.2 3.0H4.8M1.2 4.2H4.8" stroke="#9a9a9a" stroke-width="0.5"/></svg>
<div class="t" style="left:566.40px;top:98px;font-size:4.6px;color:#1e1e1e;letter-spacing:0.011px;">Propagate Frame 1 Changes</div>
<div class="a" style="left:544.20px;top:104.24px;width:89.40px;height:8.68px;background:#d8d8d8;"></div>
<div class="a" style="left:544.20px;top:112.47px;width:89.40px;height:0.45px;background:#cdcdcd;"></div>
<div class="a" style="left:544.20px;top:104.24px;width:89.40px;height:0.40px;background:#e9e9e9;"></div>
<div class="a" style="left:545.60px;top:106.44px;width:4.60px;height:4.40px;background:#e0e0e0;border:0.35px solid #cfcfcf;box-sizing:border-box;"></div>
<svg class="a" style="left:556.20px;top:105.84px" width="6.2" height="6.0" viewBox="0 0 6.2 6.0"><rect x="0.4" y="0.4" width="5.2" height="5.0" fill="#dadada" stroke="#747474" stroke-width="0.6"/><rect x="0.4" y="0.4" width="5.2" height="1.3" fill="#858585"/><path d="M1.2 3.0H4.8M1.2 4.2H4.8" stroke="#9a9a9a" stroke-width="0.5"/></svg>
<div class="t" style="left:566.40px;top:106px;font-size:4.6px;color:#1e1e1e;letter-spacing:0.028px;">Delete Frame</div>
<div class="a" style="left:544.20px;top:112.92px;width:89.40px;height:8.68px;background:#d8d8d8;"></div>
<div class="a" style="left:544.20px;top:121.15px;width:89.40px;height:0.45px;background:#cdcdcd;"></div>
<div class="a" style="left:544.20px;top:112.92px;width:89.40px;height:0.40px;background:#e9e9e9;"></div>
<div class="a" style="left:545.60px;top:115.12px;width:4.60px;height:4.40px;background:#e0e0e0;border:0.35px solid #cfcfcf;box-sizing:border-box;"></div>
<svg class="a" style="left:556.20px;top:114.52px" width="6.2" height="6.0" viewBox="0 0 6.2 6.0"><rect x="0.4" y="0.4" width="5.2" height="5.0" fill="#dadada" stroke="#747474" stroke-width="0.6"/><rect x="0.4" y="0.4" width="5.2" height="1.3" fill="#858585"/><path d="M1.2 3.0H4.8M1.2 4.2H4.8" stroke="#9a9a9a" stroke-width="0.5"/></svg>
<div class="t" style="left:566.40px;top:115px;font-size:4.6px;color:#1e1e1e;letter-spacing:0.017px;">Make Frames From Layers</div>
<div class="a" style="left:544.20px;top:121.60px;width:89.40px;height:8.68px;background:#b6cef7;"></div>
<div class="a" style="left:544.20px;top:129.83px;width:89.40px;height:0.45px;background:#a9c0ea;"></div>
<div class="a" style="left:544.20px;top:121.60px;width:89.40px;height:0.40px;background:#c9dbf7;"></div>
<div class="a" style="left:545.60px;top:123.80px;width:4.60px;height:4.40px;background:#d2e0f6;border:0.35px solid #b4c8ea;box-sizing:border-box;"></div>
<svg class="a" style="left:556.20px;top:123.20px" width="6.2" height="6.0" viewBox="0 0 6.2 6.0"><rect x="0.4" y="0.4" width="5.2" height="5.0" fill="#dadada" stroke="#747474" stroke-width="0.6"/><rect x="0.4" y="0.4" width="5.2" height="1.3" fill="#858585"/><path d="M1.2 3.0H4.8M1.2 4.2H4.8" stroke="#9a9a9a" stroke-width="0.5"/></svg>
<div class="t" style="left:566.40px;top:124px;font-size:4.6px;color:#1e1e1e;letter-spacing:0.033px;">Set Frame Delay</div>
<div class="a" style="left:633.60px;top:34.80px;width:6.40px;height:95.48px;background:#a4a4a4;"></div>
<div class="a" style="left:633.60px;top:34.80px;width:0.40px;height:95.48px;background:#8a8a8a;"></div>
<div class="a" style="left:634.00px;top:34.80px;width:6.00px;height:38.60px;background:linear-gradient(90deg,#f4f4f4,#e2e2e2);"></div>
<div class="a" style="left:634.00px;top:40.20px;width:6.00px;height:0.30px;background:#c0c0c0;"></div>
<svg class="a" style="left:635.80px;top:36.80px" width="2.4" height="1.6" viewBox="0 0 2.4 1.6"><path d="M0 1.5H2.4L1.2 0Z" fill="#333"/></svg>
<div class="a" style="left:634.00px;top:73.40px;width:6.00px;height:50.00px;background:linear-gradient(180deg,#adadad,#9a9a9a);"></div>
<div class="a" style="left:634.00px;top:123.40px;width:6.00px;height:6.88px;background:linear-gradient(180deg,#fafafa,#e6e6e6);"></div>
<svg class="a" style="left:635.80px;top:126.40px" width="2.4" height="1.6" viewBox="0 0 2.4 1.6"><path d="M0 0H2.4L1.2 1.5Z" fill="#333"/></svg>
<div class="a" style="left:544.20px;top:130.28px;width:95.80px;height:7.92px;background:#d6d6d6;"></div>
<div class="a" style="left:544.20px;top:130.28px;width:95.80px;height:0.40px;background:#b4b4b4;"></div>
<svg class="a" style="left:600.60px;top:131.68px" width="5.6" height="5.4" viewBox="0 0 5.6 5.4"><rect x="1.6" y="1.4" width="3.4" height="3.6" fill="#e4e4e4" stroke="#444" stroke-width="0.5"/><path d="M0.4 1.6H2.4M1.4 0.6V2.6" stroke="#333" stroke-width="0.6"/></svg>
<svg class="a" style="left:612.40px;top:132.08px" width="6.4" height="4.8" viewBox="0 0 6.4 4.8"><rect x="0.4" y="1.0" width="5.4" height="3.4" rx="0.4" fill="#4a4a4a"/><rect x="1.6" y="0.3" width="1.8" height="0.9" fill="#4a4a4a"/><circle cx="3.1" cy="2.7" r="1.1" fill="#cfcfcf"/></svg>
<svg class="a" style="left:624.20px;top:131.68px" width="4.4" height="5.4" viewBox="0 0 4.4 5.4"><path d="M0.2 1.0H4.0M1.4 0.4H2.8" stroke="#333" stroke-width="0.6"/><path d="M0.6 1.5H3.6L3.3 5.0H0.9Z" fill="#444"/></svg>
<div class="a" style="left:544.20px;top:138.20px;width:95.80px;height:1.60px;background:#6c6c6c;"></div>
<div class="a" style="left:544.20px;top:139.60px;width:95.80px;height:6.80px;background:#8b8b8b;"></div>
<div class="a" style="left:544.20px;top:146.00px;width:95.80px;height:0.40px;background:#7a7a7a;"></div>
<div class="a" style="left:544.40px;top:139.60px;width:32.20px;height:6.80px;background:#d6d6d6;"></div>
<div class="a" style="left:544.40px;top:139.60px;width:32.20px;height:0.50px;background:#f0f0f0;"></div>
<div class="t" style="left:547.60px;top:141px;font-size:4.5px;color:#222;letter-spacing:-0.114px;font-weight:bold;">Adjustments</div>
<svg class="a" style="left:634.20px;top:141.60px" width="4.4" height="3.0" viewBox="0 0 4.4 3.0"><path d="M0 0.2H1.6L0.8 1.2Z" fill="#e0e0e0"/><path d="M2.0 0.2H4.4M2.0 1.2H4.4M2.0 2.2H4.4" stroke="#e0e0e0" stroke-width="0.45"/></svg>
<div class="t" style="left:548.00px;top:149px;font-size:4.5px;color:#222;letter-spacing:0.206px;font-weight:bold;">Add an adjustment</div>
<svg class="a" style="left:561.70px;top:159.50px;opacity:0.92" width="6.6" height="5.4" viewBox="0 0 6.4 5.6"><circle cx="3.2" cy="2.8" r="1.3" fill="#333"/><path d="M3.2 0V1.2M3.2 4.4V5.6M0.2 2.8H1.6M4.8 2.8H6.2M1.0 0.6L2.0 1.6M4.4 4.0L5.4 5.0M5.4 0.6L4.4 1.6M1.0 5.0L2.0 4.0" stroke="#333" stroke-width="0.7"/></svg>
<svg class="a" style="left:572.30px;top:159.50px;opacity:0.92" width="6.6" height="5.4" viewBox="0 0 6.4 5.6"><path d="M0.2 4.6L1.4 3.0L2.2 3.6L3.2 0.8L4.2 2.8L5.0 2.2L6.2 4.6Z" fill="#3a3a3a"/><rect x="0.1" y="4.4" width="6.2" height="1.0" fill="#3a3a3a"/></svg>
<svg class="a" style="left:581.30px;top:159.50px;opacity:0.92" width="6.6" height="5.4" viewBox="0 0 6.4 5.6"><rect x="0.4" y="0.4" width="5.6" height="4.8" fill="#c4c4c4" stroke="#3a3a3a" stroke-width="0.7"/><path d="M0.4 5.2L6.0 0.4V5.2Z" fill="#444"/></svg>
<svg class="a" style="left:590.70px;top:159.50px;opacity:0.92" width="6.6" height="5.4" viewBox="0 0 6.4 5.6"><rect x="0.4" y="0.4" width="5.6" height="4.8" fill="#bcbcbc" stroke="#3a3a3a" stroke-width="0.7"/><path d="M0.4 4.0C2.0 4.0 2.2 1.6 3.2 1.6C4.2 1.6 4.4 3.2 6.0 1.2V5.2H0.4Z" fill="#444"/></svg>
<svg class="a" style="left:600.10px;top:159.50px;opacity:0.92" width="6.6" height="5.4" viewBox="0 0 6.4 5.6"><path d="M0.6 0.6H5.8L3.2 5.2Z" fill="#ddd" stroke="#333" stroke-width="0.9"/></svg>
<svg class="a" style="left:557.70px;top:170.30px;opacity:0.92" width="6.6" height="5.4" viewBox="0 0 6.4 5.6"><rect x="0.4" y="0.4" width="5.6" height="4.8" fill="#9a9a9a" stroke="#3a3a3a" stroke-width="0.7"/><path d="M2.3 0.4V5.2M4.2 0.4V5.2M0.4 2.0H6.0M0.4 3.6H6.0" stroke="#444" stroke-width="0.6"/></svg>
<svg class="a" style="left:567.70px;top:170.30px;opacity:0.92" width="6.6" height="5.4" viewBox="0 0 6.4 5.6"><path d="M0.6 4.6C0.6 2.2 1.8 0.8 3.2 0.8C4.6 0.8 5.8 2.2 5.8 4.6" fill="none" stroke="#333" stroke-width="1.0"/><path d="M0 4.4H2.0L1.0 5.4ZM4.4 4.4H6.4L5.4 5.4Z" fill="#3a3a3a"/></svg>
<svg class="a" style="left:577.30px;top:170.30px;opacity:0.92" width="6.6" height="5.4" viewBox="0 0 6.4 5.6"><rect x="0.4" y="0.4" width="5.6" height="4.8" fill="#c4c4c4" stroke="#3a3a3a" stroke-width="0.7"/><path d="M0.4 5.2L6.0 0.4V5.2Z" fill="#444"/></svg>
<svg class="a" style="left:586.70px;top:170.30px;opacity:0.92" width="6.6" height="5.4" viewBox="0 0 6.4 5.6"><ellipse cx="3.2" cy="2.4" rx="3.0" ry="2.1" fill="#4a4a4a"/><path d="M1.6 3.8L1.0 5.4L3.0 4.2Z" fill="#4a4a4a"/><ellipse cx="3.0" cy="2.2" rx="1.3" ry="0.7" fill="#9a9a9a"/></svg>
<svg class="a" style="left:595.90px;top:170.30px;opacity:0.92" width="6.6" height="5.4" viewBox="0 0 6.4 5.6"><circle cx="3.2" cy="1.8" r="1.7" fill="#4a4a4a"/><circle cx="1.9" cy="3.7" r="1.7" fill="#3c3c3c"/><circle cx="4.5" cy="3.7" r="1.7" fill="#5a5a5a"/><circle cx="3.2" cy="3.0" r="0.6" fill="#ddd"/></svg>
<svg class="a" style="left:605.10px;top:170.30px;opacity:0.92" width="6.6" height="5.4" viewBox="0 0 6.4 5.6"><rect x="0.4" y="0.4" width="5.6" height="4.8" fill="#9a9a9a" stroke="#3a3a3a" stroke-width="0.7"/><path d="M2.3 0.4V5.2M4.2 0.4V5.2M0.4 2.0H6.0M0.4 3.6H6.0" stroke="#444" stroke-width="0.6"/></svg>
<svg class="a" style="left:562.70px;top:180.50px;opacity:0.92" width="6.6" height="5.4" viewBox="0 0 6.4 5.6"><rect x="0.4" y="0.4" width="5.6" height="4.8" fill="#5a5a5a" stroke="#333" stroke-width="0.6"/><rect x="1.6" y="1.4" width="2.6" height="2.4" fill="#e4e4e4"/></svg>
<svg class="a" style="left:572.30px;top:180.50px;opacity:0.92" width="6.6" height="5.4" viewBox="0 0 6.4 5.6"><rect x="0.4" y="0.4" width="5.6" height="4.8" fill="#c4c4c4" stroke="#3a3a3a" stroke-width="0.7"/><path d="M0.4 5.2L6.0 0.4V5.2Z" fill="#444"/></svg>
<svg class="a" style="left:581.70px;top:180.50px;opacity:0.92" width="6.6" height="5.4" viewBox="0 0 6.4 5.6"><rect x="0.4" y="0.4" width="5.6" height="4.8" fill="#bcbcbc" stroke="#3a3a3a" stroke-width="0.7"/><path d="M0.4 4.0C2.0 4.0 2.2 1.6 3.2 1.6C4.2 1.6 4.4 3.2 6.0 1.2V5.2H0.4Z" fill="#444"/></svg>
<svg class="a" style="left:590.90px;top:180.50px;opacity:0.92" width="6.6" height="5.4" viewBox="0 0 6.4 5.6"><rect x="0.4" y="0.4" width="5.6" height="4.8" fill="#c4c4c4" stroke="#3a3a3a" stroke-width="0.7"/><path d="M0.4 5.2L6.0 0.4V5.2Z" fill="#444"/></svg>
<svg class="a" style="left:600.10px;top:180.50px;opacity:0.92" width="6.6" height="5.4" viewBox="0 0 6.4 5.6"><defs><linearGradient id="ag" x1="0" x2="1"><stop offset="0" stop-color="#2e2e2e"/><stop offset="1" stop-color="#e6e6e6"/></linearGradient></defs><rect x="0.4" y="0.4" width="5.6" height="4.8" fill="url(#ag)" stroke="#3a3a3a" stroke-width="0.5"/></svg>
<div class="a" style="left:544.20px;top:190.80px;width:95.80px;height:1.80px;background:#6c6c6c;"></div>
<div class="a" style="left:544.20px;top:192.60px;width:95.80px;height:6.80px;background:#8b8b8b;"></div>
<div class="a" style="left:544.20px;top:199.00px;width:95.80px;height:0.40px;background:#7a7a7a;"></div>
<div class="a" style="left:544.40px;top:192.60px;width:18.60px;height:6.80px;background:#d6d6d6;"></div>
<div class="a" style="left:544.40px;top:192.60px;width:18.60px;height:0.50px;background:#f0f0f0;"></div>
<div class="t" style="left:547.00px;top:194px;font-size:4.5px;color:#222;letter-spacing:-0.185px;font-weight:bold;">Layers</div>
<div class="a" style="left:563.40px;top:192.90px;width:24.00px;height:6.20px;background:#969696;"></div>
<div class="a" style="left:587.40px;top:192.90px;width:0.40px;height:6.20px;background:#7c7c7c;"></div>
<div class="t" style="left:566.40px;top:194px;font-size:4.5px;color:#333;letter-spacing:-0.207px;font-weight:bold;">Channels</div>
<div class="a" style="left:587.80px;top:192.90px;width:17.60px;height:6.20px;background:#969696;"></div>
<div class="a" style="left:605.40px;top:192.90px;width:0.40px;height:6.20px;background:#7c7c7c;"></div>
<div class="t" style="left:591.60px;top:194px;font-size:4.5px;color:#333;letter-spacing:-0.171px;font-weight:bold;">Paths</div>
<svg class="a" style="left:634.20px;top:194.60px" width="4.4" height="3.0" viewBox="0 0 4.4 3.0"><path d="M0 0.2H1.6L0.8 1.2Z" fill="#e0e0e0"/><path d="M2.0 0.2H4.4M2.0 1.2H4.4M2.0 2.2H4.4" stroke="#e0e0e0" stroke-width="0.45"/></svg>
<div class="a" style="left:546.00px;top:200.20px;width:29.60px;height:7.80px;background:linear-gradient(180deg,#fdfdfd,#ececec);border:0.4px solid #b4b4b4;box-sizing:border-box;border-radius:0.8px;"></div>
<svg class="a" style="left:547.60px;top:202.00px" width="4" height="4.4" viewBox="0 0 4 4.4"><circle cx="1.6" cy="1.6" r="1.1" fill="none" stroke="#333" stroke-width="0.6"/><path d="M2.4 2.4L3.6 4.0" stroke="#333" stroke-width="0.7"/></svg>
<div class="t" style="left:554.00px;top:202px;font-size:4.6px;color:#222;letter-spacing:-0.052px;">Kind</div>
<svg class="a" style="left:571.80px;top:202.00px" width="2.2" height="4.4" viewBox="0 0 2.2 4.4"><path d="M0 1.7L1.1 0.2L2.2 1.7ZM0 2.7L1.1 4.2L2.2 2.7Z" fill="#444"/></svg>
<svg class="a" style="left:581.40px;top:201.60px" width="6" height="5.2" viewBox="0 0 6 5.2"><rect x="0.4" y="0.6" width="5.0" height="3.8" fill="#e8e8e8" stroke="#3a3a3a" stroke-width="0.6"/><path d="M0.8 4.0L2.2 2.4L3.2 3.4L4.0 2.8L5.0 4.0Z" fill="#555"/></svg>
<svg class="a" style="left:590.80px;top:201.60px" width="5.4" height="5.2" viewBox="0 0 5.4 5.2"><circle cx="2.6" cy="2.6" r="2.1" fill="#e8e8e8" stroke="#333" stroke-width="0.6"/><path d="M2.6 0.5A2.1 2.1 0 0 0 2.6 4.7Z" fill="#333"/></svg>
<svg class="a" style="left:600.60px;top:201.80px" width="5" height="5" viewBox="0 0 5 5"><path d="M0.4 0.4H4.4V1.6H4.0L3.7 1.1H2.9V3.8L3.5 4.1V4.4H1.3V4.1L1.9 3.8V1.1H1.1L0.8 1.6H0.4Z" fill="#2e2e2e"/></svg>
<svg class="a" style="left:609.60px;top:201.80px" width="5.4" height="5" viewBox="0 0 5.4 5"><rect x="1.0" y="1.0" width="3.4" height="2.8" fill="none" stroke="#333" stroke-width="0.5"/><rect x="0.3" y="0.3" width="1.3" height="1.3" fill="#333"/><rect x="3.8" y="0.3" width="1.3" height="1.3" fill="#333"/><rect x="0.3" y="3.2" width="1.3" height="1.3" fill="#333"/><rect x="3.8" y="3.2" width="1.3" height="1.3" fill="#333"/></svg>
<svg class="a" style="left:618.80px;top:201.40px" width="5.4" height="5.6" viewBox="0 0 5.4 5.6"><path d="M1.2 2.2C1.2 0.2 4.2 0.2 4.2 2.2V2.6H1.2Z" fill="#3a3a3a"/><rect x="0.6" y="2.6" width="4.2" height="2.6" rx="0.3" fill="#3a3a3a"/><circle cx="2.7" cy="1.8" r="0.7" fill="#ddd"/></svg>
<div class="a" style="left:631.40px;top:200.80px;width:3.20px;height:6.00px;background:linear-gradient(180deg,#909090 0%,#909090 38%,#bcbcbc 38%,#c8c8c8 100%);border:0.3px solid #8e8e8e;box-sizing:border-box;border-radius:0.6px;"></div>
<div class="a" style="left:546.00px;top:210.40px;width:41.60px;height:7.80px;background:linear-gradient(180deg,#fdfdfd,#ececec);border:0.4px solid #b4b4b4;box-sizing:border-box;border-radius:0.8px;"></div>
<div class="t" style="left:549.00px;top:212px;font-size:4.6px;color:#222;letter-spacing:0.096px;">Normal</div>
<svg class="a" style="left:584.00px;top:212.20px" width="2.2" height="4.4" viewBox="0 0 2.2 4.4"><path d="M0 1.7L1.1 0.2L2.2 1.7ZM0 2.7L1.1 4.2L2.2 2.7Z" fill="#444"/></svg>
<div class="t" style="left:591.00px;top:212px;font-size:4.6px;color:#222;letter-spacing:0.066px;">Opacity:</div>
<div class="a" style="left:610.60px;top:210.40px;width:16.40px;height:7.80px;background:#fbfbfb;border:0.4px solid #b4b4b4;box-sizing:border-box;"></div>
<div class="t" style="left:612.00px;top:212px;font-size:4.6px;color:#222;letter-spacing:0.459px;">100%</div>
<div class="a" style="left:627.20px;top:210.40px;width:6.80px;height:7.80px;background:linear-gradient(180deg,#f6f6f6,#d8d8d8);border:0.4px solid #b4b4b4;box-sizing:border-box;"></div>
<svg class="a" style="left:629.40px;top:213.80px" width="2.4" height="1.6" viewBox="0 0 2.4 1.6"><path d="M0 0H2.4L1.2 1.5Z" fill="#333"/></svg>
<div class="t" style="left:546.40px;top:223px;font-size:4.6px;color:#222;letter-spacing:0.040px;">Unify:</div>
<svg class="a" style="left:560.80px;top:222.40px" width="6.4" height="5.8" viewBox="0 0 6.4 5.8"><rect x="0.3" y="0.4" width="3.6" height="3.0" fill="#e0e0e0" stroke="#3a3a3a" stroke-width="0.5"/><path d="M3.0 2.6V5.4M1.6 4.0H4.4" stroke="#222" stroke-width="0.7"/><path d="M4.6 4.6H6.2L5.4 5.6Z" fill="#333"/></svg>
<svg class="a" style="left:569.20px;top:222.40px" width="6.4" height="5.8" viewBox="0 0 6.4 5.8"><rect x="0.3" y="0.4" width="3.6" height="3.0" fill="#e0e0e0" stroke="#3a3a3a" stroke-width="0.5"/><circle cx="3.6" cy="3.8" r="1.3" fill="#333"/><path d="M4.8 4.6H6.4L5.6 5.6Z" fill="#333"/></svg>
<svg class="a" style="left:577.60px;top:222.40px" width="6.4" height="5.8" viewBox="0 0 6.4 5.8"><rect x="0.3" y="0.4" width="3.6" height="3.0" fill="#e0e0e0" stroke="#3a3a3a" stroke-width="0.5"/><path d="M2.4 5.4L3.2 3.0L4.0 5.4M2.7 4.6H3.7" stroke="#222" stroke-width="0.5" fill="none"/><path d="M4.8 4.6H6.4L5.6 5.6Z" fill="#333"/></svg>
<div class="a" style="left:588.00px;top:222.80px;width:4.60px;height:4.60px;background:#f6f6f6;border:0.4px solid #b4b4b4;box-sizing:border-box;"></div>
<svg class="a" style="left:588.40px;top:221.80px" width="5" height="5" viewBox="0 0 5 5"><path d="M0.8 2.8L2.0 4.2L4.6 0.4" fill="none" stroke="#222" stroke-width="0.8"/></svg>
<div class="t" style="left:594.60px;top:223px;font-size:4.6px;color:#222;letter-spacing:0.127px;">Propagate Frame 1</div>
<div class="t" style="left:546.40px;top:234px;font-size:4.6px;color:#222;letter-spacing:0.041px;">Lock:</div>
<svg class="a" style="left:561.00px;top:233.80px" width="5" height="5" viewBox="0 0 5 5"><rect x="0.4" y="0.4" width="4" height="4" fill="#e4e4e4" stroke="#444" stroke-width="0.5"/><path d="M0.4 0.4H2.4V2.4H0.4ZM2.4 2.4H4.4V4.4H2.4Z" fill="#8a8a8a"/></svg>
<svg class="a" style="left:569.60px;top:233.40px" width="5.4" height="5.6" viewBox="0 0 5.4 5.6"><path d="M5.0 0.4L2.6 3.0L3.2 3.6L5.3 0.8Z" fill="#2a2a2a"/><path d="M2.4 3.2C1.6 3.2 1.4 3.8 1.3 4.2C1.2 4.7 0.8 4.9 0.4 5.0C1.4 5.4 2.8 5.0 3.0 3.8Z" fill="#222"/></svg>
<svg class="a" style="left:578.4px;top:234.0px" width="4.6" height="4.6" viewBox="0 0 5.2 5.2"><path d="M2.6 0.2L3.5 1.3H2.9V2.3H3.9V1.7L5.0 2.6L3.9 3.5V2.9H2.9V3.9H3.5L2.6 5.0L1.7 3.9H2.3V2.9H1.3V3.5L0.2 2.6L1.3 1.7V2.3H2.3V1.3H1.7Z" fill="#3a3a3a"/></svg>
<svg class="a" style="left:586.00px;top:233.20px" width="5" height="5.8" viewBox="0 0 5 5.8"><path d="M1.3 2.6V1.8C1.3 0.2 3.7 0.2 3.7 1.8V2.6" fill="none" stroke="#2a2a2a" stroke-width="0.7"/><rect x="0.6" y="2.6" width="3.8" height="2.8" rx="0.3" fill="#2a2a2a"/></svg>
<div class="t" style="left:601.00px;top:234px;font-size:4.6px;color:#222;letter-spacing:-0.031px;">Fill:</div>
<div class="a" style="left:610.60px;top:232.20px;width:16.40px;height:7.80px;background:#fbfbfb;border:0.4px solid #b4b4b4;box-sizing:border-box;"></div>
<div class="t" style="left:612.00px;top:234px;font-size:4.6px;color:#222;letter-spacing:0.459px;">100%</div>
<div class="a" style="left:627.20px;top:232.20px;width:6.80px;height:7.80px;background:linear-gradient(180deg,#f6f6f6,#d8d8d8);border:0.4px solid #b4b4b4;box-sizing:border-box;"></div>
<svg class="a" style="left:629.40px;top:235.60px" width="2.4" height="1.6" viewBox="0 0 2.4 1.6"><path d="M0 0H2.4L1.2 1.5Z" fill="#333"/></svg>
<div class="a" style="left:544.20px;top:241.40px;width:89.40px;height:0.40px;background:#a8a8a8;"></div>
<div class="a" style="left:544.20px;top:241.80px;width:89.40px;height:14.44px;background:#d9d9d9;"></div>
<div class="a" style="left:544.20px;top:255.79px;width:89.40px;height:0.45px;background:#c2c2c2;"></div>
<div class="a" style="left:544.20px;top:241.80px;width:89.40px;height:0.35px;background:#e8e8e8;"></div>
<div class="a" style="left:544.20px;top:241.80px;width:10.80px;height:14.44px;background:#dedede;"></div>
<div class="a" style="left:555.00px;top:241.80px;width:0.40px;height:14.44px;background:#c0c0c0;"></div>
<div class="a" style="left:547.60px;top:246.80px;width:4.40px;height:4.40px;background:#dedede;border:0.3px solid #cdcdcd;box-sizing:border-box;"></div>
<div class="a" style="left:557.00px;top:243.15px;width:12.00px;height:11.50px;background:#0a0a0a;"></div>
<div class="a" style="left:557.49px;top:243.33px;width:11.00px;height:10.98px;border-radius:50%;background:radial-gradient(circle closest-side at 50% 50%, #ef9d29 0%, #ec9627 50%, #df8822 75%, #c26f1b 90%, #8a4b0f 100%);"></div>
<div class="t" style="left:573.00px;top:247px;font-size:4.6px;color:#1e1e1e;letter-spacing:0.094px;">Layer 9</div>
<div class="a" style="left:544.20px;top:256.24px;width:89.40px;height:14.44px;background:#d9d9d9;"></div>
<div class="a" style="left:544.20px;top:270.23px;width:89.40px;height:0.45px;background:#c2c2c2;"></div>
<div class="a" style="left:544.20px;top:256.24px;width:89.40px;height:0.35px;background:#e8e8e8;"></div>
<div class="a" style="left:544.20px;top:256.24px;width:10.80px;height:14.44px;background:#dedede;"></div>
<div class="a" style="left:555.00px;top:256.24px;width:0.40px;height:14.44px;background:#c0c0c0;"></div>
<div class="a" style="left:547.60px;top:261.24px;width:4.40px;height:4.40px;background:#dedede;border:0.3px solid #cdcdcd;box-sizing:border-box;"></div>
<div class="a" style="left:557.00px;top:257.59px;width:12.00px;height:11.50px;background:#0a0a0a;"></div>
<div class="a" style="left:557.49px;top:257.77px;width:11.00px;height:10.98px;border-radius:50%;background:radial-gradient(circle closest-side at 50% 50%, #ef9d29 0%, #ec9627 50%, #df8822 75%, #c26f1b 90%, #8a4b0f 100%);"></div>
<div class="t" style="left:573.00px;top:261px;font-size:4.6px;color:#1e1e1e;letter-spacing:0.094px;">Layer 8</div>
<div class="a" style="left:544.20px;top:270.68px;width:89.40px;height:14.44px;background:#d9d9d9;"></div>
<div class="a" style="left:544.20px;top:284.67px;width:89.40px;height:0.45px;background:#c2c2c2;"></div>
<div class="a" style="left:544.20px;top:270.68px;width:89.40px;height:0.35px;background:#e8e8e8;"></div>
<div class="a" style="left:544.20px;top:270.68px;width:10.80px;height:14.44px;background:#dedede;"></div>
<div class="a" style="left:555.00px;top:270.68px;width:0.40px;height:14.44px;background:#c0c0c0;"></div>
<div class="a" style="left:547.60px;top:275.68px;width:4.40px;height:4.40px;background:#dedede;border:0.3px solid #cdcdcd;box-sizing:border-box;"></div>
<div class="a" style="left:557.00px;top:272.03px;width:12.00px;height:11.50px;background:#0a0a0a;"></div>
<div class="a" style="left:557.49px;top:272.21px;width:11.00px;height:10.98px;border-radius:50%;background:radial-gradient(circle closest-side at 50% 50%, #ef9d29 0%, #ec9627 50%, #df8822 75%, #c26f1b 90%, #8a4b0f 100%);"></div>
<div class="t" style="left:573.00px;top:276px;font-size:4.6px;color:#1e1e1e;letter-spacing:0.094px;">Layer 7</div>
<div class="a" style="left:544.20px;top:285.12px;width:89.40px;height:14.44px;background:#d9d9d9;"></div>
<div class="a" style="left:544.20px;top:299.11px;width:89.40px;height:0.45px;background:#c2c2c2;"></div>
<div class="a" style="left:544.20px;top:285.12px;width:89.40px;height:0.35px;background:#e8e8e8;"></div>
<div class="a" style="left:544.20px;top:285.12px;width:10.80px;height:14.44px;background:#dedede;"></div>
<div class="a" style="left:555.00px;top:285.12px;width:0.40px;height:14.44px;background:#c0c0c0;"></div>
<div class="a" style="left:547.60px;top:290.12px;width:4.40px;height:4.40px;background:#dedede;border:0.3px solid #cdcdcd;box-sizing:border-box;"></div>
<div class="a" style="left:557.00px;top:286.47px;width:12.00px;height:11.50px;background:#0a0a0a;"></div>
<div class="a" style="left:557.49px;top:286.65px;width:11.00px;height:10.98px;border-radius:50%;background:radial-gradient(circle closest-side at 50% 50%, #ef9d29 0%, #ec9627 50%, #df8822 75%, #c26f1b 90%, #8a4b0f 100%);"></div>
<div class="t" style="left:573.00px;top:290px;font-size:4.6px;color:#1e1e1e;letter-spacing:0.094px;">Layer 6</div>
<div class="a" style="left:544.20px;top:299.56px;width:89.40px;height:14.44px;background:#d9d9d9;"></div>
<div class="a" style="left:544.20px;top:313.55px;width:89.40px;height:0.45px;background:#c2c2c2;"></div>
<div class="a" style="left:544.20px;top:299.56px;width:89.40px;height:0.35px;background:#e8e8e8;"></div>
<div class="a" style="left:544.20px;top:299.56px;width:10.80px;height:14.44px;background:#dedede;"></div>
<div class="a" style="left:555.00px;top:299.56px;width:0.40px;height:14.44px;background:#c0c0c0;"></div>
<div class="a" style="left:547.60px;top:304.56px;width:4.40px;height:4.40px;background:#dedede;border:0.3px solid #cdcdcd;box-sizing:border-box;"></div>
<div class="a" style="left:557.00px;top:300.91px;width:12.00px;height:11.50px;background:#0a0a0a;"></div>
<div class="a" style="left:557.49px;top:301.09px;width:11.00px;height:10.98px;border-radius:50%;background:radial-gradient(circle closest-side at 50% 50%, #ef9d29 0%, #ec9627 50%, #df8822 75%, #c26f1b 90%, #8a4b0f 100%);"></div>
<div class="t" style="left:573.00px;top:304px;font-size:4.6px;color:#1e1e1e;letter-spacing:0.094px;">Layer 5</div>
<div class="a" style="left:544.20px;top:314.00px;width:89.40px;height:14.44px;background:#d9d9d9;"></div>
<div class="a" style="left:544.20px;top:327.99px;width:89.40px;height:0.45px;background:#c2c2c2;"></div>
<div class="a" style="left:544.20px;top:314.00px;width:89.40px;height:0.35px;background:#e8e8e8;"></div>
<div class="a" style="left:544.20px;top:314.00px;width:10.80px;height:14.44px;background:#dedede;"></div>
<div class="a" style="left:555.00px;top:314.00px;width:0.40px;height:14.44px;background:#c0c0c0;"></div>
<div class="a" style="left:547.60px;top:319.00px;width:4.40px;height:4.40px;background:#dedede;border:0.3px solid #cdcdcd;box-sizing:border-box;"></div>
<div class="a" style="left:557.00px;top:315.35px;width:12.00px;height:11.50px;background:#0a0a0a;"></div>
<div class="a" style="left:557.49px;top:315.53px;width:11.00px;height:10.98px;border-radius:50%;background:radial-gradient(circle closest-side at 50% 50%, #ef9d29 0%, #ec9627 50%, #df8822 75%, #c26f1b 90%, #8a4b0f 100%);"></div>
<div class="t" style="left:573.00px;top:319px;font-size:4.6px;color:#1e1e1e;letter-spacing:0.094px;">Layer 4</div>
<div class="a" style="left:544.20px;top:328.44px;width:89.40px;height:14.44px;background:#d9d9d9;"></div>
<div class="a" style="left:544.20px;top:342.43px;width:89.40px;height:0.45px;background:#c2c2c2;"></div>
<div class="a" style="left:544.20px;top:328.44px;width:89.40px;height:0.35px;background:#e8e8e8;"></div>
<div class="a" style="left:544.20px;top:328.44px;width:10.80px;height:14.44px;background:#dedede;"></div>
<div class="a" style="left:555.00px;top:328.44px;width:0.40px;height:14.44px;background:#c0c0c0;"></div>
<div class="a" style="left:547.60px;top:333.44px;width:4.40px;height:4.40px;background:#dedede;border:0.3px solid #cdcdcd;box-sizing:border-box;"></div>
<div class="a" style="left:557.00px;top:329.79px;width:12.00px;height:11.50px;background:#0a0a0a;"></div>
<div class="a" style="left:557.49px;top:329.97px;width:11.00px;height:10.98px;border-radius:50%;background:radial-gradient(circle closest-side at 50% 50%, #ef9d29 0%, #ec9627 50%, #df8822 75%, #c26f1b 90%, #8a4b0f 100%);"></div>
<div class="t" style="left:573.00px;top:333px;font-size:4.6px;color:#1e1e1e;letter-spacing:0.094px;">Layer 3</div>
<div class="a" style="left:544.20px;top:342.88px;width:89.40px;height:14.44px;background:#d9d9d9;"></div>
<div class="a" style="left:544.20px;top:356.87px;width:89.40px;height:0.45px;background:#c2c2c2;"></div>
<div class="a" style="left:544.20px;top:342.88px;width:89.40px;height:0.35px;background:#e8e8e8;"></div>
<div class="a" style="left:544.20px;top:342.88px;width:10.80px;height:14.44px;background:#dedede;"></div>
<div class="a" style="left:555.00px;top:342.88px;width:0.40px;height:14.44px;background:#c0c0c0;"></div>
<div class="a" style="left:547.60px;top:347.88px;width:4.40px;height:4.40px;background:#dedede;border:0.3px solid #cdcdcd;box-sizing:border-box;"></div>
<div class="a" style="left:557.00px;top:344.23px;width:12.00px;height:11.50px;background:#0a0a0a;"></div>
<div class="a" style="left:557.49px;top:344.41px;width:11.00px;height:10.98px;border-radius:50%;background:radial-gradient(circle closest-side at 50% 50%, #ef9d29 0%, #ec9627 50%, #df8822 75%, #c26f1b 90%, #8a4b0f 100%);"></div>
<div class="t" style="left:573.00px;top:348px;font-size:4.6px;color:#1e1e1e;letter-spacing:0.094px;">Layer 2</div>
<div class="a" style="left:544.20px;top:357.32px;width:89.40px;height:14.44px;background:#d9d9d9;"></div>
<div class="a" style="left:544.20px;top:371.31px;width:89.40px;height:0.45px;background:#c2c2c2;"></div>
<div class="a" style="left:544.20px;top:357.32px;width:89.40px;height:0.35px;background:#e8e8e8;"></div>
<div class="a" style="left:544.20px;top:357.32px;width:10.80px;height:14.44px;background:#dedede;"></div>
<div class="a" style="left:555.00px;top:357.32px;width:0.40px;height:14.44px;background:#c0c0c0;"></div>
<div class="a" style="left:547.60px;top:362.32px;width:4.40px;height:4.40px;background:#dedede;border:0.3px solid #cdcdcd;box-sizing:border-box;"></div>
<div class="a" style="left:557.00px;top:358.67px;width:12.00px;height:11.50px;background:#0a0a0a;"></div>
<div class="a" style="left:557.49px;top:358.85px;width:11.00px;height:10.98px;border-radius:50%;background:radial-gradient(circle closest-side at 50% 50%, #ef9d29 0%, #ec9627 50%, #df8822 75%, #c26f1b 90%, #8a4b0f 100%);"></div>
<div class="t" style="left:573.00px;top:362px;font-size:4.6px;color:#1e1e1e;letter-spacing:0.094px;">Layer 1</div>
<div class="a" style="left:544.20px;top:371.76px;width:89.40px;height:14.44px;background:#d9d9d9;"></div>
<div class="a" style="left:555.40px;top:371.76px;width:78.20px;height:14.44px;background:#b4ccfa;"></div>
<div class="a" style="left:544.20px;top:385.75px;width:89.40px;height:0.45px;background:#c2c2c2;"></div>
<div class="a" style="left:544.20px;top:371.76px;width:89.40px;height:0.35px;background:#e8e8e8;"></div>
<div class="a" style="left:544.20px;top:371.76px;width:10.80px;height:14.44px;background:#dedede;"></div>
<div class="a" style="left:555.00px;top:371.76px;width:0.40px;height:14.44px;background:#c0c0c0;"></div>
<svg class="a" style="left:547.00px;top:377.36px" width="5.6" height="3.6" viewBox="0 0 5.6 3.6"><path d="M0.2 1.8C1.4 0.2 4.2 0.2 5.4 1.8C4.2 3.4 1.4 3.4 0.2 1.8Z" fill="#3a3a3a"/><circle cx="2.8" cy="1.8" r="0.8" fill="#d0d0d0"/><circle cx="2.8" cy="1.8" r="0.4" fill="#222"/></svg>
<div class="a" style="left:556.20px;top:372.36px;width:13.40px;height:13.14px;background:#1a1a1a;"></div>
<div class="a" style="left:557.00px;top:373.11px;width:12.00px;height:11.50px;background:#0a0a0a;"></div>
<div class="a" style="left:557.49px;top:373.29px;width:11.00px;height:10.98px;border-radius:50%;background:radial-gradient(circle closest-side at 50% 50%, #ef9d29 0%, #ec9627 50%, #df8822 75%, #c26f1b 90%, #8a4b0f 100%);"></div>
<div class="t" style="left:573.00px;top:377px;font-size:4.6px;color:#1e1e1e;letter-spacing:0.094px;">Layer 0</div>
<div class="a" style="left:633.60px;top:241.80px;width:6.40px;height:148.60px;background:#e4e4e4;"></div>
<div class="a" style="left:638.40px;top:192.00px;width:1.60px;height:208.00px;background:#a2a2a2;"></div>
<div class="a" style="left:633.60px;top:241.80px;width:0.40px;height:148.60px;background:#b8b8b8;"></div>
<div class="a" style="left:544.20px;top:390.20px;width:95.80px;height:0.50px;background:#aaaaaa;"></div>
<div class="a" style="left:544.20px;top:390.70px;width:95.80px;height:9.30px;background:#dcdcdc;"></div>
<svg class="a" style="opacity:0.78;transform:scale(0.88);left:562.00px;top:394.60px" width="6.4" height="3.0" viewBox="0 0 6.4 3.0"><rect x="0.3" y="0.4" width="2.8" height="2.0" rx="1" fill="none" stroke="#aaa" stroke-width="0.6"/><rect x="3.1" y="0.4" width="2.8" height="2.0" rx="1" fill="none" stroke="#aaa" stroke-width="0.6"/></svg>
<svg class="a" style="opacity:0.78;transform:scale(0.88);left:572.60px;top:393.20px" width="6.6" height="5.6" viewBox="0 0 6.6 5.6"><text x="0" y="4.4" font-family="Liberation Serif" font-style="italic" font-weight="bold" font-size="5.2" fill="#2a2a2a">fx</text><path d="M5.2 3.6H6.6L5.9 4.5Z" fill="#333"/></svg>
<svg class="a" style="opacity:0.78;transform:scale(0.88);left:582.60px;top:393.80px" width="6" height="4.8" viewBox="0 0 6 4.8"><rect x="0.4" y="0.4" width="5.2" height="4.0" fill="#4a4a4a"/><circle cx="3.0" cy="2.4" r="1.2" fill="#e4e4e4"/></svg>
<svg class="a" style="opacity:0.78;transform:scale(0.88);left:593.20px;top:393.40px" width="6.6" height="5.4" viewBox="0 0 6.6 5.4"><circle cx="2.7" cy="2.7" r="2.2" fill="#e6e6e6" stroke="#333" stroke-width="0.6"/><path d="M2.7 0.5A2.2 2.2 0 0 0 2.7 4.9Z" fill="#333"/><path d="M5.2 3.6H6.6L5.9 4.5Z" fill="#333"/></svg>
<svg class="a" style="opacity:0.78;transform:scale(0.88);left:602.20px;top:393.80px" width="6.4" height="4.8" viewBox="0 0 6.4 4.8"><path d="M0.4 1.0H2.4L3.0 1.6H5.8V4.4H0.4Z" fill="#6a6a6a" stroke="#3a3a3a" stroke-width="0.5"/></svg>
<svg class="a" style="opacity:0.78;transform:scale(0.88);left:613.20px;top:393.60px" width="6" height="5" viewBox="0 0 6 5"><rect x="0.4" y="0.4" width="4.6" height="4.0" fill="#e4e4e4" stroke="#3a3a3a" stroke-width="0.6"/><path d="M0.4 4.4L2.0 4.4L0.4 2.8Z" fill="#3a3a3a"/></svg>
<svg class="a" style="opacity:0.78;transform:scale(0.88);left:624.00px;top:393.20px" width="4.4" height="5.6" viewBox="0 0 4.4 5.6"><path d="M0.2 1.0H4.0M1.4 0.4H2.8" stroke="#333" stroke-width="0.6"/><path d="M0.6 1.5H3.6L3.3 5.2H0.9Z" fill="#444"/></svg>
<div class="a" style="left:537.30px;top:32.00px;width:5.70px;height:320.00px;background:linear-gradient(90deg,#dcdcdc,#f4f4f4 40%,#e4e4e4);"></div>
<div class="a" style="left:537.00px;top:32.00px;width:0.40px;height:326.00px;background:#b0b0b0;"></div>
</div>
</body>
</html>
